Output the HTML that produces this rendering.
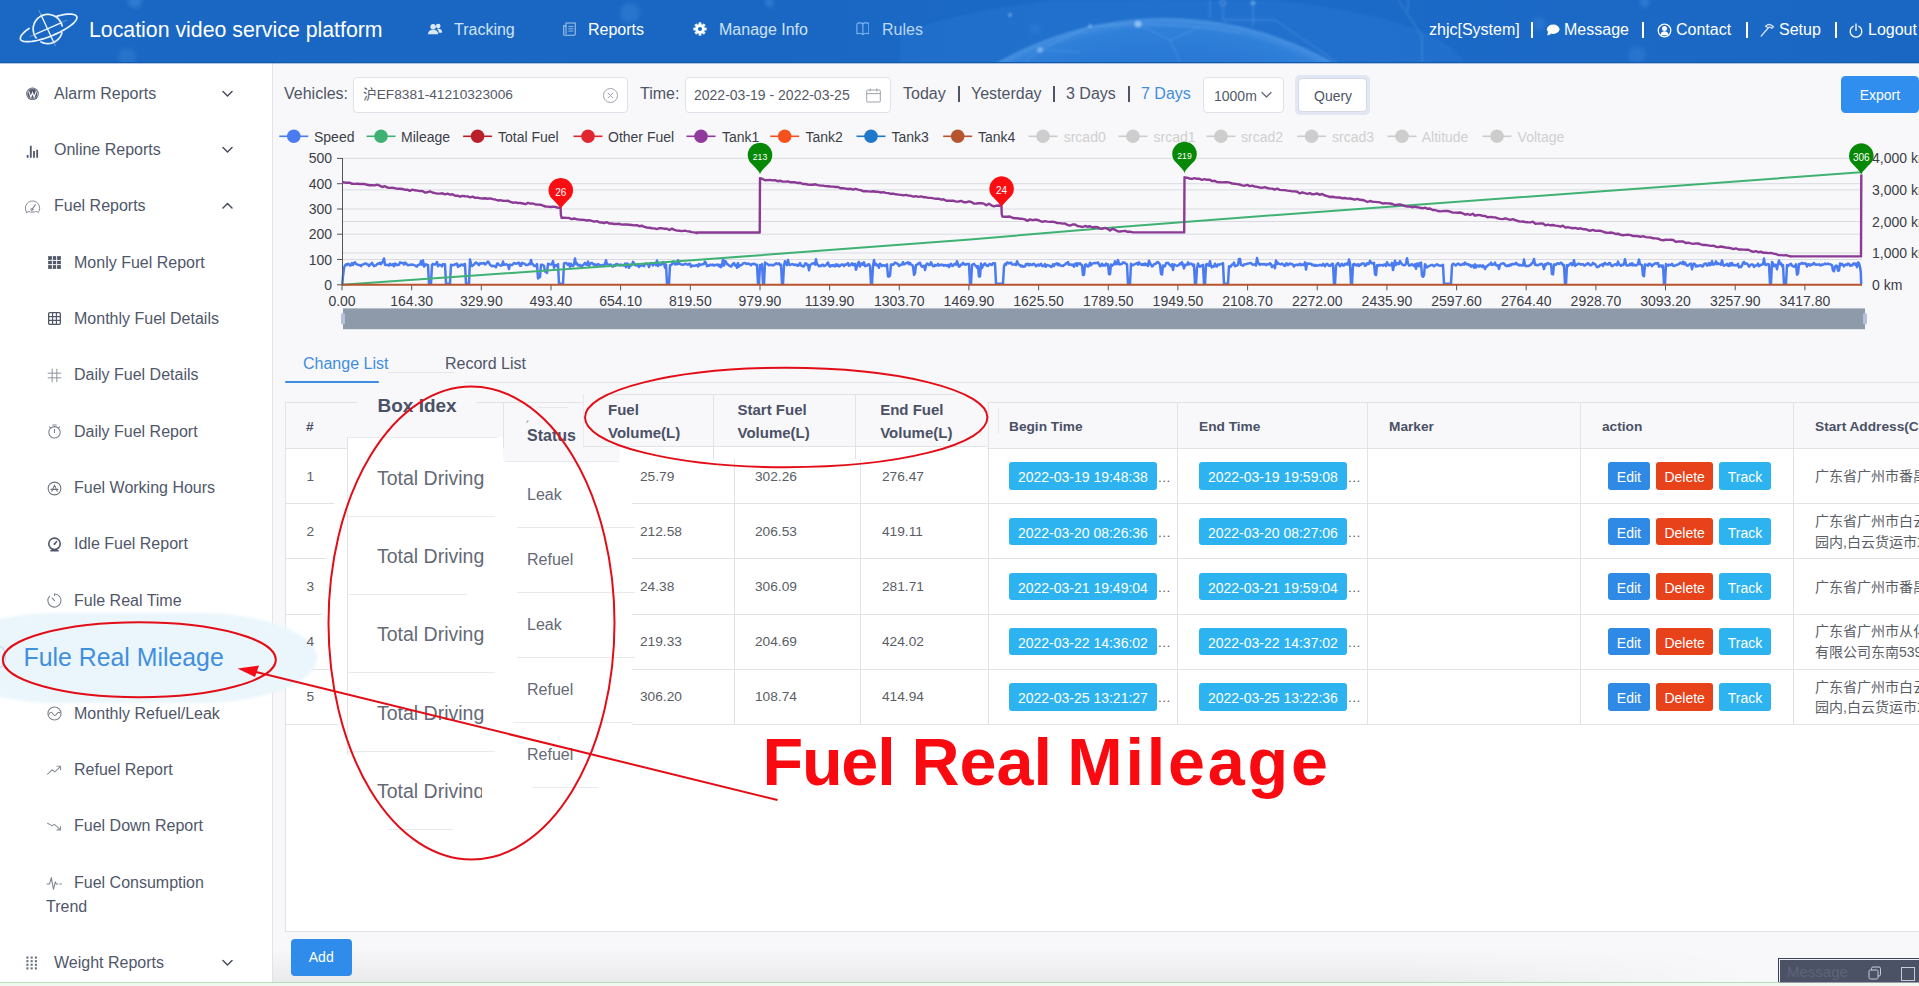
<!DOCTYPE html>
<html lang="en">
<head>
<meta charset="utf-8">
<title>Location video service platform</title>
<style>
*{box-sizing:border-box;margin:0;padding:0}
html,body{width:1919px;height:986px;overflow:hidden;background:#f8f8fa}
body{position:relative;font-family:"Liberation Sans","Noto Sans CJK SC",sans-serif;font-size:14px;color:#555a66;-webkit-font-smoothing:antialiased}
.abs{position:absolute}
/* header */
#hdr{position:absolute;left:0;top:0;width:1919px;height:63px;border-bottom:1px solid #1559a6;z-index:5;background:linear-gradient(90deg,#1a68c3 0%,#1967c2 40%,#1c6bc8 60%,#1a67c3 100%);overflow:hidden;color:#fff}
#hdr2{position:absolute;left:0;top:63px;width:1919px;height:1px;background:rgba(40,110,200,.38);z-index:5}
#hdr .t{position:absolute;white-space:nowrap;font-size:16px;line-height:20px;top:19.800px}
#hdr .title{position:absolute;left:89px;top:16.600px;font-size:21.300px;line-height:26px;white-space:nowrap}
#hdr .dim{color:#cfe2f7}
#hdr .bk{position:absolute;border-radius:50%;background:rgba(90,160,240,.35);filter:blur(2px)}
/* sidebar */
#side{position:absolute;left:0;top:62px;width:273px;height:924px;background:#fff;border-right:1px solid #e3e3e7;overflow:hidden}
#side .it{position:absolute;left:0;width:272px;height:24px;line-height:24px;font-size:16px;color:#51576a;white-space:nowrap}
#side .it span{position:absolute;top:0}
#side svg{position:absolute}
/* main */
#main{position:absolute;left:273px;top:62px;width:1646px;height:924px;background:#f8f8fa}
.lbl{position:absolute;font-size:16px;line-height:20px;color:#4f5565;white-space:nowrap}
.inp{position:absolute;height:36px;border:1px solid #dfe2e8;border-radius:4px;background:#fff}
.inp span{position:absolute;top:9px;font-size:14px;line-height:18px;color:#555a66;white-space:nowrap}
.btn{position:absolute;border-radius:3px;color:#fff;font-size:14px;text-align:center;white-space:nowrap}
.pipe{position:absolute;width:1.500px;height:16px;background:#fff}
</style>
</head>
<body>
<div id="hdr2"></div>
<div id="hdr">
  <div class="bk" style="left:128px;top:-6px;width:14px;height:14px"></div>
  <div class="bk" style="left:118px;top:48px;width:18px;height:18px;opacity:.6"></div>
  <div class="bk" style="left:620px;top:3px;width:20px;height:20px;opacity:.7"></div>
  <div class="bk" style="left:765px;top:-2px;width:9px;height:9px"></div>
  <div class="bk" style="left:1030px;top:24px;width:10px;height:10px;opacity:.6"></div>
  <div class="bk" style="left:1532px;top:17px;width:14px;height:14px;opacity:.6"></div>
  <div class="bk" style="left:1628px;top:46px;width:18px;height:18px;opacity:.6"></div>
  <div class="bk" style="left:1640px;top:-2px;width:9px;height:9px"></div>
  <svg class="abs" style="left:900px;top:0;filter:blur(1.100px)" width="620" height="63" viewBox="900 0 620 63">
    <defs><radialGradient id="gg" cx="1165" cy="357" r="339" gradientUnits="userSpaceOnUse"><stop offset=".82" stop-color="#3d8fe6" stop-opacity=".16"/><stop offset=".97" stop-color="#4da0f2" stop-opacity=".34"/><stop offset="1" stop-color="#7fc0ff" stop-opacity=".42"/></radialGradient></defs>
    <ellipse cx="1165" cy="70" rx="300" ry="75" fill="rgba(60,140,235,.16)"/><circle cx="1165" cy="357" r="339" fill="url(#gg)"/>
    <path d="M1090 26L1138 24L1200 27L1240 33M1090 26L1040 50L1025 62M1138 24L1170 40L1200 27M1170 40L1180 62M1040 50L1080 52" fill="none" stroke="rgba(170,215,255,.22)" stroke-width="1"/>
    <circle cx="1138" cy="24" r="3.500" fill="rgba(200,230,255,.55)"/><circle cx="1090" cy="26" r="2" fill="rgba(200,230,255,.4)"/><circle cx="1040" cy="50" r="3" fill="rgba(200,230,255,.4)"/><circle cx="1010" cy="15" r="2" fill="rgba(200,230,255,.4)"/>
    <path d="M1223 6V20H1275L1338 63M1253 4V26M1210 0V18M1398 0L1422 36V63M1408 0V12" fill="none" stroke="rgba(130,190,250,.38)" stroke-width="1"/>
    <circle cx="1223" cy="3" r="2.600" fill="none" stroke="rgba(150,205,255,.5)"/><circle cx="1253" cy="3" r="2.500" fill="rgba(150,205,255,.45)"/>
  </svg>
  <!-- logo -->
<svg class="abs" style="left:10px;top:2px" width="80" height="56" viewBox="10 2 80 56" fill="none" stroke="#eaf4ff" stroke-linecap="round" stroke-linejoin="round">
<path d="M57.1 16.1L58.9 15.6L60.6 15.3L62.2 14.9L63.8 14.6L65.3 14.4L66.8 14.2L68.1 14.1L69.4 14.1L70.6 14.1L71.7 14.2L72.7 14.3L73.7 14.5L74.5 14.7L75.1 15.0L75.7 15.4L76.2 15.8L76.5 16.2L76.8 16.7L76.9 17.3L76.9 17.9L76.7 18.5L76.5 19.2L76.1 19.9L75.6 20.7L75.0 21.5L74.3 22.3L73.5 23.1L72.5 24.0L71.5 24.8L70.4 25.7L69.1 26.6L67.8 27.5L66.4 28.4L65.0 29.3L63.4 30.2L61.8 31.1L60.2 32.0L58.5 32.8L56.7 33.6L54.9 34.4L53.1 35.2L51.3 36.0L49.5 36.7L47.6 37.4L45.8 38.0L44.0 38.6L42.1 39.1L40.4 39.6L38.6 40.1L36.9 40.5L35.3 40.8L33.7 41.1L32.1 41.4L30.7 41.5L29.3 41.7L28.0 41.7L26.8 41.7L25.6 41.7L24.6 41.5L23.7 41.4L22.9 41.1L22.2 40.8L21.6 40.5L21.1 40.1L20.7 39.7L20.5 39.2L20.3 38.6L20.3 38.0L20.5 37.4L20.7 36.7L21.0 36.0L21.5 35.2L22.1 34.5L22.8 33.7L23.6 32.8L24.5 32.0L25.5 31.1L26.6 30.2L27.9 29.3L29.1 28.4" stroke-width="1.700"/>
<path d="M61.9 32.7L61.7 33.5L61.4 34.3L61.0 35.1L60.7 35.9L60.2 36.7L59.7 37.4L59.2 38.1L58.6 38.8L58.0 39.4L57.4 40.0L56.7 40.6L56.0 41.1L55.3 41.5L54.5 42.0L53.7 42.3L52.9 42.7L52.1 43.0L51.2 43.2L50.4 43.4L49.5 43.5L48.6 43.6L47.8 43.6L46.9 43.6L46.0 43.5L45.2 43.4L44.3 43.2L43.5 42.9L42.6 42.7L41.8 42.3L41.0 41.9" stroke-width="1.700"/>
<path d="M36.2 37.9L35.7 37.2L35.2 36.4L34.8 35.7L34.4 34.9L34.1 34.1L33.8 33.2L33.6 32.4L33.4 31.5L33.3 30.7L33.2 29.8L33.2 28.9L33.2 28.1L33.3 27.2L33.4 26.4L33.6 25.5L33.9 24.7L34.1 23.8L34.5 23.0L34.9 22.2L35.3 21.5L35.8 20.8L36.3 20.1L36.8 19.4L37.4 18.7L38.0 18.1L38.7 17.6L39.4 17.1L40.1 16.6L40.9 16.1L41.7 15.8L42.5 15.4L43.3 15.1L44.1 14.9L45.0 14.7L45.8 14.5L46.7 14.4L47.6 14.4L48.4 14.4L49.3 14.5L50.2 14.6L51.0 14.8L51.9 15.0L52.7 15.2L53.5 15.6L54.3 15.9L55.1 16.3L55.8 16.8L56.5 17.3L57.2 17.8L57.9 18.4L58.5 19.0L59.0 19.7L59.6 20.4L60.1 21.1L60.5 21.8L60.9 22.6L61.3 23.4L61.6 24.2L61.9 25.0L62.1 25.9" stroke-width="1.700"/>
<path d="M41.200 15.200L53.600 42" stroke-width="1.400"/>
<path d="M39 10.500L41.200 15.200M53.600 42L55.400 45.700" stroke-width="1" stroke="rgba(200,225,255,.45)"/>
<path d="M36 33.900L61 22.800" stroke-width="1.400"/>
<path d="M29.900 36.600L36 33.900M61 22.800L66.800 20.200" stroke-width="1" stroke="rgba(200,225,255,.4)"/>
</svg>
  <div class="title">Location video service platform</div>
  <!-- nav -->
  <svg class="abs" style="left:427.800px;top:22.800px" width="14.600" height="12.800" viewBox="0 0 16 14" fill="rgba(255,255,255,.85)">
    <circle cx="5.6" cy="4.2" r="3"/><path d="M0 12.4c0-3.6 2.6-5 5.6-5s5.6 1.4 5.6 5z"/>
    <circle cx="11.2" cy="3.4" r="2.5"/><path d="M10.6 6.4c2.6-.4 5 1 5 4.2h-3.8c-.1-1.8-.6-3.2-1.900-4z"/>
  </svg>
  <div class="t dim" style="left:454px">Tracking</div>
  <svg class="abs" style="left:562.500px;top:22.200px" width="13.300" height="14.200" viewBox="0 0 15 16" fill="none" stroke="rgba(255,255,255,.62)" stroke-width="1.2">
    <path d="M3.4 1.2h10.4v12.2a1.6 1.6 0 0 1-1.600 1.600H2.400a1.600 1.600 0 0 1-1.600-1.600V4.400h2.600z M3.400 4.400v9.200"/>
    <path d="M6 5h5.600M6 7.600h5.600M6 10.200h5.600" stroke-width="1"/>
  </svg>
  <div class="t" style="left:588px">Reports</div>
  <svg class="abs" style="left:692.800px;top:22.300px" width="14" height="14" viewBox="0 0 16 16">
    <g fill="rgba(255,255,255,.9)">
      <circle cx="8" cy="8" r="5.400"/>
      <g id="gt"><rect x="6.300" y="0.400" width="3.400" height="15.200" rx=".8"/></g>
      <use href="#gt" transform="rotate(45 8 8)"/><use href="#gt" transform="rotate(90 8 8)"/><use href="#gt" transform="rotate(135 8 8)"/>
    </g>
    <circle cx="8" cy="8" r="2.300" fill="#1a65c1"/>
  </svg>
  <div class="t dim" style="left:719px">Manage Info</div>
  <svg class="abs" style="left:855.600px;top:21.600px" width="13.800" height="13.800" viewBox="0 0 13.800 13.800" fill="none" stroke="rgba(150,200,255,.85)" stroke-width="1.050" stroke-linejoin="round">
    <path d="M.9 12V2.900C.9 1.500 1.700 .9 3 .9H4.800C6.100 .9 6.900 1.500 6.900 2.900V12.800M6.900 2.900C6.900 1.500 7.700 .9 9 .9H10.800C12.100 .9 12.900 1.500 12.900 2.900V12M.9 12C3 10.800 5.300 11.200 6.900 12.800C8.500 11.200 10.800 10.800 12.900 12"/>
  </svg>
  <div class="t" style="left:882px;color:#bcd8f8">Rules</div>
  <!-- right -->
  <div class="t" style="left:1429px">zhjc[System]</div>
  <div class="pipe" style="left:1531.25px;top:21.800px"></div>
  <svg class="abs" style="left:1546px;top:24px" width="14" height="12" viewBox="0 0 14 12" fill="#fff"><ellipse cx="7.200" cy="5.200" rx="6.300" ry="4.700"/><path d="M1.200 11.400l1-4 3.200 2.600z"/></svg>
  <div class="t" style="left:1564px">Message</div>
  <div class="pipe" style="left:1642.25px;top:21.800px"></div>
  <svg class="abs" style="left:1657px;top:23px" width="15" height="15" viewBox="0 0 15 15"><circle cx="7.500" cy="7.500" r="6.300" fill="none" stroke="#fff" stroke-width="1.300"/><circle cx="7.500" cy="5.600" r="2.500" fill="#fff"/><path d="M3.600 12.200c0-3 1.800-4 3.900-4s3.900 1 3.900 4z" fill="#fff"/></svg>
  <div class="t" style="left:1676px">Contact</div>
  <div class="pipe" style="left:1746.25px;top:21.800px"></div>
  <svg class="abs" style="left:1760px;top:23px" width="15" height="14" viewBox="0 0 15 14" fill="none" stroke="rgba(255,255,255,.8)" stroke-width="1.300" stroke-linecap="round"><path d="M1.200 13l7.200-8.200M5.600 3.200c2.400-2.200 5.200-2.200 7.800.6l-1.600 1.600c-1.200-1.200-2.600-1.600-3.800-.6z"/></svg>
  <div class="t" style="left:1779px">Setup</div>
  <div class="pipe" style="left:1835.25px;top:21.800px"></div>
  <svg class="abs" style="left:1849px;top:23px" width="14" height="15" viewBox="0 0 14 15" fill="none" stroke="#fff" stroke-width="1.300" stroke-linecap="round"><path d="M4.200 3.200a5.800 5.800 0 1 0 5.600 0M7 .9v6.400"/></svg>
  <div class="t" style="left:1868px">Logout</div>
</div>
<div id="side">
<svg style="left:23.8px;top:23.1px" width="17" height="17" viewBox="0 0 16 16" fill="none" stroke="#51576a" stroke-width="1.1" stroke-linecap="round" stroke-linejoin="round"><circle cx="8" cy="8.300" r="5.900" fill="#51576a" stroke="none"/><circle cx="8" cy="8.300" r="4.900" stroke="#fff" stroke-width=".45"/><path d="M4.600 6.200l1.900 5.200 1.500-4.200 1.500 4.200 1.900-5.200" stroke="#fff" stroke-width="1.050" stroke-linejoin="miter"/></svg>
<div class="it" style="top:19.6px"><span style="left:54px">Alarm Reports</span></div>
<svg style="left:222px;top:27.6px" width="11" height="8" viewBox="0 0 11 8" fill="none" stroke="#4a4f5e" stroke-width="1.500" stroke-linecap="round" stroke-linejoin="round"><path d="M1 1.500L5.500 6 10 1.500"/></svg>
<svg style="left:23.8px;top:79.5px" width="17" height="17" viewBox="0 0 16 16" fill="none" stroke="#51576a" stroke-width="1.1" stroke-linecap="round" stroke-linejoin="round"><path d="M3.400 12.200v2.600M6.400 3.600v11.200M9.400 8.400v6.400M12.400 7.200v7.600" stroke-width="1.700" stroke-linecap="butt"/></svg>
<div class="it" style="top:76.0px"><span style="left:54px">Online Reports</span></div>
<svg style="left:222px;top:84.0px" width="11" height="8" viewBox="0 0 11 8" fill="none" stroke="#4a4f5e" stroke-width="1.500" stroke-linecap="round" stroke-linejoin="round"><path d="M1 1.500L5.500 6 10 1.500"/></svg>
<svg style="left:23.8px;top:135.9px" width="17" height="17" viewBox="0 0 16 16" fill="none" stroke="#51576a" stroke-width="1.1" stroke-linecap="round" stroke-linejoin="round"><path d="M2.600 13.600c-3.400-4.400 0-10.800 5.400-10.800s8.800 6.400 5.400 10.800c-1.400-1-2.600-1.200-3.400-.4h-4c-.8-.8-2-.6-3.400.4z" stroke="#7f8491" stroke-width=".9"/><path d="M7.600 10.600l3-4.200" stroke="#7f8491" stroke-width="1.100"/><circle cx="7.400" cy="10.800" r="1" stroke="#7f8491" stroke-width=".9"/></svg>
<div class="it" style="top:132.4px"><span style="left:54px">Fuel Reports</span></div>
<svg style="left:222px;top:140.4px" width="11" height="8" viewBox="0 0 11 8" fill="none" stroke="#4a4f5e" stroke-width="1.500" stroke-linecap="round" stroke-linejoin="round"><path d="M1 6L5.500 1.500 10 6"/></svg>
<svg style="left:45.5px;top:192.1px" width="17" height="17" viewBox="0 0 16 16" fill="none" stroke="#51576a" stroke-width="1.1" stroke-linecap="round" stroke-linejoin="round"><rect x="2" y="2" width="12" height="12" fill="#51576a" stroke="none"/><path d="M6 2v12M10 2v12M2 6h12M2 10h12" stroke="#fff" stroke-width=".9"/></svg>
<div class="it" style="top:188.6px"><span style="left:74px">Monly Fuel Report</span></div>
<svg style="left:45.5px;top:248.3px" width="17" height="17" viewBox="0 0 16 16" fill="none" stroke="#51576a" stroke-width="1.1" stroke-linecap="round" stroke-linejoin="round"><rect x="2.500" y="2.500" width="11" height="11" rx="1" stroke-width="1.200"/><path d="M6.200 2.500v11M9.800 2.500v11M2.500 6.200h11M2.500 9.800h11" stroke-width="1.100"/></svg>
<div class="it" style="top:244.8px"><span style="left:74px">Monthly Fuel Details</span></div>
<svg style="left:45.5px;top:304.7px" width="17" height="17" viewBox="0 0 16 16" fill="none" stroke="#51576a" stroke-width="1.1" stroke-linecap="round" stroke-linejoin="round"><path d="M5.800 2v12M10.200 2v12M2 5.800h12M2 10.200h12" stroke="#8a8f9c" stroke-width=".9"/></svg>
<div class="it" style="top:301.2px"><span style="left:74px">Daily Fuel Details</span></div>
<svg style="left:45.5px;top:361.1px" width="17" height="17" viewBox="0 0 16 16" fill="none" stroke="#51576a" stroke-width="1.1" stroke-linecap="round" stroke-linejoin="round"><circle cx="8" cy="8.800" r="5.400" stroke="#7d8290" stroke-width="1"/><path d="M8 5.800v3.200M6.400 1.800h3.200M3.200 3.600l1 .9M12.800 3.600l-1 .9" stroke="#7d8290" stroke-width="1"/></svg>
<div class="it" style="top:357.6px"><span style="left:74px">Daily Fuel Report</span></div>
<svg style="left:45.5px;top:417.5px" width="17" height="17" viewBox="0 0 16 16" fill="none" stroke="#51576a" stroke-width="1.1" stroke-linecap="round" stroke-linejoin="round"><circle cx="8" cy="8" r="6" stroke="#6d7280" stroke-width="1"/><path d="M5.400 10.600l2.600-5.800 2.600 5.800M4.600 8.800h6.800" stroke="#6d7280" stroke-width="1"/></svg>
<div class="it" style="top:414.0px"><span style="left:74px">Fuel Working Hours</span></div>
<svg style="left:45.5px;top:473.9px" width="17" height="17" viewBox="0 0 16 16" fill="none" stroke="#51576a" stroke-width="1.1" stroke-linecap="round" stroke-linejoin="round"><circle cx="8" cy="7.400" r="5.400" stroke-width="1.500"/><path d="M8 7.600l2-2.400M4.600 13.800h6.800" stroke-width="1.400"/><circle cx="8" cy="7.600" r=".9" fill="#51576a" stroke="none"/></svg>
<div class="it" style="top:470.4px"><span style="left:74px">Idle Fuel Report</span></div>
<svg style="left:45.5px;top:530.1px" width="17" height="17" viewBox="0 0 16 16" fill="none" stroke="#51576a" stroke-width="1.1" stroke-linecap="round" stroke-linejoin="round"><path d="M8 1.800a6.200 6.200 0 1 1-4.600 2" stroke="#7d8290" stroke-width="1"/><path d="M8 8.200l-2.400-2.600M8 1.800v1.400" stroke="#7d8290" stroke-width="1"/></svg>
<div class="it" style="top:526.6px"><span style="left:74px">Fule Real Time</span></div>
<svg style="left:45.5px;top:643.1px" width="17" height="17" viewBox="0 0 16 16" fill="none" stroke="#51576a" stroke-width="1.1" stroke-linecap="round" stroke-linejoin="round"><circle cx="8" cy="8" r="6.200" stroke="#7d8290" stroke-width="1"/><path d="M2.600 9c1.600-3 2.800-2.400 4 -.6s2.400 2 3.600-.2c.8-1.400 1.800-1.600 3.200-.8" stroke="#7d8290" stroke-width="1"/></svg>
<div class="it" style="top:639.6px"><span style="left:74px">Monthly Refuel/Leak</span></div>
<svg style="left:45.5px;top:699.5px" width="17" height="17" viewBox="0 0 16 16" fill="none" stroke="#51576a" stroke-width="1.1" stroke-linecap="round" stroke-linejoin="round"><path d="M1.500 11.500l4.200-4.200 2.600 2 5.200-5M10.500 4h3.200v3.200" stroke="#8a8f9c" stroke-width="1"/></svg>
<div class="it" style="top:696.0px"><span style="left:74px">Refuel Report</span></div>
<svg style="left:45.5px;top:755.9px" width="17" height="17" viewBox="0 0 16 16" fill="none" stroke="#51576a" stroke-width="1.1" stroke-linecap="round" stroke-linejoin="round"><path d="M1.500 5l4 2.200 2.400-1.200 5.600 5M10.400 11.200h3.200V8" stroke="#8a8f9c" stroke-width="1"/></svg>
<div class="it" style="top:752.4px"><span style="left:74px">Fuel Down Report</span></div>
<svg style="left:45.5px;top:812.1px" width="17" height="17" viewBox="0 0 16 16" fill="none" stroke="#51576a" stroke-width="1.1" stroke-linecap="round" stroke-linejoin="round"><path d="M1 9.400h2.400l1.600-6 2 11 1.800-7 .9 2h1.300M13 9.400h1.600" stroke="#7d8290" stroke-width="1"/></svg>
<div class="it" style="top:808.6px"><span style="left:74px">Fuel Consumption</span></div>
<svg style="left:23.8px;top:892.9px" width="17" height="17" viewBox="0 0 16 16" fill="none" stroke="#51576a" stroke-width="1.1" stroke-linecap="round" stroke-linejoin="round"><rect x="2.2" y="1.4" width="2" height="2" fill="#6d7280" stroke="none"/><rect x="2.2" y="4.8" width="2" height="2" fill="#6d7280" stroke="none"/><rect x="2.2" y="8.2" width="2" height="2" fill="#6d7280" stroke="none"/><rect x="2.2" y="11.6" width="2" height="2" fill="#6d7280" stroke="none"/><rect x="6.2" y="1.4" width="2" height="2" fill="#6d7280" stroke="none"/><rect x="6.2" y="4.8" width="2" height="2" fill="#6d7280" stroke="none"/><rect x="6.2" y="8.2" width="2" height="2" fill="#6d7280" stroke="none"/><rect x="6.2" y="11.6" width="2" height="2" fill="#6d7280" stroke="none"/><rect x="10.2" y="1.4" width="2" height="2" fill="#6d7280" stroke="none"/><rect x="10.2" y="4.8" width="2" height="2" fill="#6d7280" stroke="none"/><rect x="10.2" y="8.2" width="2" height="2" fill="#6d7280" stroke="none"/><rect x="10.2" y="11.6" width="2" height="2" fill="#6d7280" stroke="none"/></svg>
<div class="it" style="top:889.4px"><span style="left:54px">Weight Reports</span></div>
<svg style="left:222px;top:897.4px" width="11" height="8" viewBox="0 0 11 8" fill="none" stroke="#4a4f5e" stroke-width="1.500" stroke-linecap="round" stroke-linejoin="round"><path d="M1 1.500L5.500 6 10 1.500"/></svg>
<div class="it" style="top:832.600px"><span style="left:46px">Trend</span></div>
</div>
<div id="main"></div>
<!-- toolbar -->
<div class="lbl" style="left:284px;top:84px">Vehicles:</div>
<div class="inp" style="left:353px;top:77px;width:275px">
  <span style="left:9px;top:8px;font-size:13.700px">沪EF8381-41210323006</span>
  <svg class="abs" style="left:248px;top:9px" width="17" height="17" viewBox="0 0 17 17" fill="none" stroke="#9ea3ad" stroke-width="1"><circle cx="8.500" cy="8.500" r="7"/><path d="M5.800 5.800l5.400 5.400M11.200 5.800l-5.400 5.400"/></svg>
</div>
<div class="lbl" style="left:640px;top:84px">Time:</div>
<div class="inp" style="left:685px;top:77px;width:206px">
  <span style="left:8px;top:8px">2022-03-19 - 2022-03-25</span>
  <svg class="abs" style="left:180px;top:10px" width="15" height="15" viewBox="0 0 15 15" fill="none" stroke="#9ea3ad" stroke-width="1"><rect x=".7" y="2" width="13.600" height="12" rx="1"/><path d="M.7 5.600h13.600M4.200 .5v3M10.800 .5v3"/></svg>
</div>
<div class="lbl" style="left:903px;top:84px">Today</div>
<div class="pipe" style="left:958.2px;top:85.500px;background:#4f5565"></div>
<div class="lbl" style="left:971px;top:84px">Yesterday</div>
<div class="pipe" style="left:1053.3px;top:85.500px;background:#4f5565"></div>
<div class="lbl" style="left:1066px;top:84px">3 Days</div>
<div class="pipe" style="left:1128.1px;top:85.500px;background:#4f5565"></div>
<div class="lbl" style="left:1141px;top:84px;color:#3f8de0">7 Days</div>
<div class="inp" style="left:1203px;top:77px;width:81px">
  <span style="left:10px">1000m</span>
  <svg class="abs" style="left:57px;top:13px" width="11" height="8" viewBox="0 0 11 8" fill="none" stroke="#666b78" stroke-width="1.300" stroke-linecap="round" stroke-linejoin="round"><path d="M1 1.500L5.500 6 10 1.500"/></svg>
</div>
<div class="abs" style="left:1295px;top:75px;width:75px;height:40px;border-radius:5px;background:#e3e7f4"></div>
<div class="inp" style="left:1298px;top:78px;width:69px;height:34px;border-color:#d5d9e6"><span style="left:15px;top:8px;color:#4f5565">Query</span></div>
<div class="btn" style="left:1841.200px;top:76.300px;width:77.800px;height:37.200px;line-height:38px;background:#308eee;border-radius:4.500px;text-align:left;padding-left:18.500px">Export</div>
<svg class="abs" style="left:273px;top:120px" width="1646" height="222" viewBox="0 0 1646 222" font-family="Liberation Sans, sans-serif" font-size="14">
<path d="M6.3 16.3h29" stroke="#4b7bf0" stroke-width="1.600"/><circle cx="20.8" cy="16.3" r="6.800" fill="#4b7bf0"/>
<text x="41.0" y="21.6" fill="#3b3e47">Speed</text>
<path d="M93.5 16.3h29" stroke="#3fb273" stroke-width="1.600"/><circle cx="108.0" cy="16.3" r="6.800" fill="#3fb273"/>
<text x="128.0" y="21.6" fill="#3b3e47">Mileage</text>
<path d="M190.1 16.3h29" stroke="#b9202c" stroke-width="1.600"/><circle cx="204.6" cy="16.3" r="6.800" fill="#b9202c"/>
<text x="225.0" y="21.6" fill="#3b3e47">Total Fuel</text>
<path d="M300.5 16.3h29" stroke="#e2262f" stroke-width="1.600"/><circle cx="315.0" cy="16.3" r="6.800" fill="#e2262f"/>
<text x="335.0" y="21.6" fill="#3b3e47">Other Fuel</text>
<path d="M413.5 16.3h29" stroke="#8f3a9c" stroke-width="1.600"/><circle cx="428.0" cy="16.3" r="6.800" fill="#8f3a9c"/>
<text x="449.0" y="21.6" fill="#3b3e47">Tank1</text>
<path d="M497.2 16.3h29" stroke="#f4511e" stroke-width="1.600"/><circle cx="511.7" cy="16.3" r="6.800" fill="#f4511e"/>
<text x="532.5" y="21.6" fill="#3b3e47">Tank2</text>
<path d="M583.5 16.3h29" stroke="#1f78c9" stroke-width="1.600"/><circle cx="598.0" cy="16.3" r="6.800" fill="#1f78c9"/>
<text x="618.5" y="21.6" fill="#3b3e47">Tank3</text>
<path d="M670.2 16.3h29" stroke="#b7552f" stroke-width="1.600"/><circle cx="684.7" cy="16.3" r="6.800" fill="#b7552f"/>
<text x="705.0" y="21.6" fill="#3b3e47">Tank4</text>
<path d="M755.5 16.3h29" stroke="#cdcdcd" stroke-width="1.600"/><circle cx="770.0" cy="16.3" r="6.800" fill="#cdcdcd"/>
<text x="790.7" y="21.6" fill="#cfcfcf">srcad0</text>
<path d="M845.5 16.3h29" stroke="#cdcdcd" stroke-width="1.600"/><circle cx="860.0" cy="16.3" r="6.800" fill="#cdcdcd"/>
<text x="880.5" y="21.6" fill="#cfcfcf">srcad1</text>
<path d="M933.5 16.3h29" stroke="#cdcdcd" stroke-width="1.600"/><circle cx="948.0" cy="16.3" r="6.800" fill="#cdcdcd"/>
<text x="968.0" y="21.6" fill="#cfcfcf">srcad2</text>
<path d="M1024.1 16.3h29" stroke="#cdcdcd" stroke-width="1.600"/><circle cx="1038.6" cy="16.3" r="6.800" fill="#cdcdcd"/>
<text x="1059.0" y="21.6" fill="#cfcfcf">srcad3</text>
<path d="M1114.5 16.3h29" stroke="#cdcdcd" stroke-width="1.600"/><circle cx="1129.0" cy="16.3" r="6.800" fill="#cdcdcd"/>
<text x="1148.7" y="21.6" fill="#cfcfcf">Altitude</text>
<path d="M1209.5 16.3h29" stroke="#cdcdcd" stroke-width="1.600"/><circle cx="1224.0" cy="16.3" r="6.800" fill="#cdcdcd"/>
<text x="1244.6" y="21.6" fill="#cfcfcf">Voltage</text>
<path d="M69 38.4H1589" stroke="#d9dbe0" stroke-width="1"/>
<path d="M69 63.7H1589" stroke="#d9dbe0" stroke-width="1"/>
<path d="M69 89.0H1589" stroke="#d9dbe0" stroke-width="1"/>
<path d="M69 114.2H1589" stroke="#d9dbe0" stroke-width="1"/>
<path d="M69 139.5H1589" stroke="#d9dbe0" stroke-width="1"/>
<path d="M69 69.9H1589" stroke="#d9dbe0" stroke-width="1"/>
<path d="M69 101.5H1589" stroke="#d9dbe0" stroke-width="1"/>
<path d="M69 133.0H1589" stroke="#d9dbe0" stroke-width="1"/>
<text x="59" y="43.4" text-anchor="end" fill="#3b3e47">500</text>
<path d="M64 38.4h5" stroke="#555" stroke-width="1"/>
<text x="59" y="68.7" text-anchor="end" fill="#3b3e47">400</text>
<path d="M64 63.7h5" stroke="#555" stroke-width="1"/>
<text x="59" y="94.0" text-anchor="end" fill="#3b3e47">300</text>
<path d="M64 89.0h5" stroke="#555" stroke-width="1"/>
<text x="59" y="119.2" text-anchor="end" fill="#3b3e47">200</text>
<path d="M64 114.2h5" stroke="#555" stroke-width="1"/>
<text x="59" y="144.5" text-anchor="end" fill="#3b3e47">100</text>
<path d="M64 139.5h5" stroke="#555" stroke-width="1"/>
<text x="59" y="169.8" text-anchor="end" fill="#3b3e47">0</text>
<path d="M64 164.8h5" stroke="#555" stroke-width="1"/>
<text x="1599" y="43.4" fill="#3b3e47">4,000 km</text>
<text x="1599" y="75.0" fill="#3b3e47">3,000 km</text>
<text x="1599" y="106.7" fill="#3b3e47">2,000 km</text>
<text x="1599" y="138.3" fill="#3b3e47">1,000 km</text>
<text x="1599" y="169.9" fill="#3b3e47">0 km</text>
<path d="M69.0 164.8v5.500" stroke="#555" stroke-width="1"/>
<text x="69.0" y="185.5" text-anchor="middle" fill="#3b3e47">0.00</text>
<path d="M138.7 164.8v5.500" stroke="#555" stroke-width="1"/>
<text x="138.7" y="185.5" text-anchor="middle" fill="#3b3e47">164.30</text>
<path d="M208.3 164.8v5.500" stroke="#555" stroke-width="1"/>
<text x="208.3" y="185.5" text-anchor="middle" fill="#3b3e47">329.90</text>
<path d="M278.0 164.8v5.500" stroke="#555" stroke-width="1"/>
<text x="278.0" y="185.5" text-anchor="middle" fill="#3b3e47">493.40</text>
<path d="M347.6 164.8v5.500" stroke="#555" stroke-width="1"/>
<text x="347.6" y="185.5" text-anchor="middle" fill="#3b3e47">654.10</text>
<path d="M417.3 164.8v5.500" stroke="#555" stroke-width="1"/>
<text x="417.3" y="185.5" text-anchor="middle" fill="#3b3e47">819.50</text>
<path d="M487.0 164.8v5.500" stroke="#555" stroke-width="1"/>
<text x="487.0" y="185.5" text-anchor="middle" fill="#3b3e47">979.90</text>
<path d="M556.6 164.8v5.500" stroke="#555" stroke-width="1"/>
<text x="556.6" y="185.5" text-anchor="middle" fill="#3b3e47">1139.90</text>
<path d="M626.3 164.8v5.500" stroke="#555" stroke-width="1"/>
<text x="626.3" y="185.5" text-anchor="middle" fill="#3b3e47">1303.70</text>
<path d="M695.9 164.8v5.500" stroke="#555" stroke-width="1"/>
<text x="695.9" y="185.5" text-anchor="middle" fill="#3b3e47">1469.90</text>
<path d="M765.6 164.8v5.500" stroke="#555" stroke-width="1"/>
<text x="765.6" y="185.5" text-anchor="middle" fill="#3b3e47">1625.50</text>
<path d="M835.3 164.8v5.500" stroke="#555" stroke-width="1"/>
<text x="835.3" y="185.5" text-anchor="middle" fill="#3b3e47">1789.50</text>
<path d="M904.9 164.8v5.500" stroke="#555" stroke-width="1"/>
<text x="904.9" y="185.5" text-anchor="middle" fill="#3b3e47">1949.50</text>
<path d="M974.6 164.8v5.500" stroke="#555" stroke-width="1"/>
<text x="974.6" y="185.5" text-anchor="middle" fill="#3b3e47">2108.70</text>
<path d="M1044.2 164.8v5.500" stroke="#555" stroke-width="1"/>
<text x="1044.2" y="185.5" text-anchor="middle" fill="#3b3e47">2272.00</text>
<path d="M1113.9 164.8v5.500" stroke="#555" stroke-width="1"/>
<text x="1113.9" y="185.5" text-anchor="middle" fill="#3b3e47">2435.90</text>
<path d="M1183.6 164.8v5.500" stroke="#555" stroke-width="1"/>
<text x="1183.6" y="185.5" text-anchor="middle" fill="#3b3e47">2597.60</text>
<path d="M1253.2 164.8v5.500" stroke="#555" stroke-width="1"/>
<text x="1253.2" y="185.5" text-anchor="middle" fill="#3b3e47">2764.40</text>
<path d="M1322.9 164.8v5.500" stroke="#555" stroke-width="1"/>
<text x="1322.9" y="185.5" text-anchor="middle" fill="#3b3e47">2928.70</text>
<path d="M1392.5 164.8v5.500" stroke="#555" stroke-width="1"/>
<text x="1392.5" y="185.5" text-anchor="middle" fill="#3b3e47">3093.20</text>
<path d="M1462.2 164.8v5.500" stroke="#555" stroke-width="1"/>
<text x="1462.2" y="185.5" text-anchor="middle" fill="#3b3e47">3257.90</text>
<path d="M1531.9 164.8v5.500" stroke="#555" stroke-width="1"/>
<text x="1531.9" y="185.5" text-anchor="middle" fill="#3b3e47">3417.80</text>
<path d="M69.3,164.0 L70.0,156.0 L71.0,148.0 L72.0,145.5 L73.0,144.3 L74.0,145.0 L75.0,143.8 L76.0,144.1 L77.0,145.5 L78.0,145.2 L79.0,143.1 L80.0,144.9 L81.0,143.0 L82.0,142.3 L83.0,144.1 L84.0,144.4 L85.0,144.8 L86.0,145.1 L87.0,145.3 L88.0,146.1 L89.0,144.8 L90.0,144.6 L91.0,144.1 L92.0,143.5 L93.0,143.4 L94.0,144.4 L95.0,144.6 L96.0,145.9 L97.0,144.9 L98.0,143.9 L99.0,142.9 L100.0,144.8 L101.0,146.1 L102.0,145.5 L103.0,145.5 L104.0,144.3 L105.0,143.5 L106.0,143.7 L107.0,142.8 L108.0,144.2 L109.0,142.6 L110.0,141.4 L111.0,138.5 L112.0,144.8 L113.0,144.9 L114.0,144.9 L115.0,144.7 L116.0,145.6 L117.0,143.8 L118.0,144.7 L119.0,145.2 L120.0,144.2 L121.0,146.3 L122.0,143.5 L123.0,144.3 L124.0,145.2 L125.0,144.8 L126.0,144.8 L127.0,142.4 L128.0,142.8 L129.0,142.9 L130.0,143.0 L131.0,144.4 L132.0,142.5 L133.0,143.5 L134.0,144.5 L135.0,145.2 L136.0,145.1 L137.0,144.8 L138.0,144.7 L139.0,144.5 L140.0,144.7 L141.0,145.1 L142.0,145.4 L143.0,146.3 L144.0,146.5 L145.0,144.9 L146.0,144.7 L147.0,144.5 L148.0,141.1 L149.0,144.7 L150.0,140.4 L151.0,146.6 L152.0,145.0 L153.0,144.3 L154.0,145.0 L155.0,144.9 L156.0,163.8 L157.0,163.8 L158.0,163.8 L159.0,144.7 L160.0,143.9 L161.0,144.6 L162.0,144.6 L163.0,143.7 L164.0,142.0 L165.0,146.2 L166.0,145.0 L167.0,144.8 L168.0,145.3 L169.0,146.4 L170.0,144.1 L171.0,144.6 L172.0,144.2 L173.0,163.8 L174.0,163.8 L175.0,163.8 L176.0,163.8 L177.0,163.8 L178.0,144.8 L179.0,144.9 L180.0,145.2 L181.0,145.0 L182.0,144.2 L183.0,144.0 L184.0,143.6 L185.0,146.9 L186.0,145.6 L187.0,145.9 L188.0,144.6 L189.0,144.8 L190.0,145.4 L191.0,144.2 L192.0,144.1 L193.0,163.8 L194.0,163.8 L195.0,163.8 L196.0,163.8 L197.0,139.5 L198.0,143.9 L199.0,146.1 L200.0,145.2 L201.0,144.6 L202.0,143.3 L203.0,142.5 L204.0,143.3 L205.0,144.1 L206.0,145.2 L207.0,143.3 L208.0,143.5 L209.0,143.3 L210.0,143.4 L211.0,143.0 L212.0,144.4 L213.0,143.9 L214.0,142.4 L215.0,141.6 L216.0,142.7 L217.0,144.7 L218.0,145.4 L219.0,146.2 L220.0,145.8 L221.0,145.9 L222.0,146.4 L223.0,147.2 L224.0,143.7 L225.0,143.4 L226.0,144.9 L227.0,145.3 L228.0,145.7 L229.0,145.3 L230.0,141.5 L231.0,144.8 L232.0,144.7 L233.0,144.3 L234.0,144.5 L235.0,145.0 L236.0,149.1 L237.0,144.6 L238.0,145.1 L239.0,145.1 L240.0,144.1 L241.0,143.0 L242.0,143.4 L243.0,143.8 L244.0,143.3 L245.0,143.0 L246.0,142.7 L247.0,145.7 L248.0,145.8 L249.0,142.9 L250.0,143.2 L251.0,143.4 L252.0,144.1 L253.0,145.0 L254.0,145.0 L255.0,144.8 L256.0,143.8 L257.0,144.2 L258.0,139.9 L259.0,144.0 L260.0,144.2 L261.0,145.9 L262.0,146.2 L263.0,145.7 L264.0,144.1 L265.0,158.4 L266.0,157.8 L267.0,157.1 L268.0,144.8 L269.0,144.7 L270.0,145.2 L271.0,145.8 L272.0,151.6 L273.0,151.5 L274.0,152.9 L275.0,143.8 L276.0,144.1 L277.0,144.4 L278.0,144.6 L279.0,143.9 L280.0,141.1 L281.0,147.9 L282.0,145.4 L283.0,145.0 L284.0,146.1 L285.0,144.2 L286.0,163.8 L287.0,163.8 L288.0,163.8 L289.0,163.8 L290.0,163.8 L291.0,143.4 L292.0,143.0 L293.0,142.9 L294.0,143.8 L295.0,144.9 L296.0,143.5 L297.0,146.8 L298.0,143.7 L299.0,145.8 L300.0,146.2 L301.0,144.1 L302.0,138.5 L303.0,144.1 L304.0,143.3 L305.0,145.6 L306.0,145.6 L307.0,144.8 L308.0,146.3 L309.0,146.3 L310.0,145.0 L311.0,144.1 L312.0,142.9 L313.0,144.5 L314.0,144.8 L315.0,141.6 L316.0,145.7 L317.0,144.3 L318.0,143.1 L319.0,143.0 L320.0,143.9 L321.0,144.9 L322.0,144.3 L323.0,145.6 L324.0,145.1 L325.0,144.0 L326.0,144.6 L327.0,144.9 L328.0,146.0 L329.0,145.6 L330.0,144.8 L331.0,145.8 L332.0,144.0 L333.0,140.2 L334.0,144.5 L335.0,144.4 L336.0,145.0 L337.0,144.8 L338.0,144.6 L339.0,146.3 L340.0,146.7 L341.0,145.1 L342.0,145.7 L343.0,144.2 L344.0,144.0 L345.0,144.8 L346.0,144.8 L347.0,145.4 L348.0,144.6 L349.0,144.9 L350.0,145.6 L351.0,145.5 L352.0,143.6 L353.0,147.1 L354.0,143.5 L355.0,144.2 L356.0,147.8 L357.0,144.8 L358.0,145.5 L359.0,144.7 L360.0,141.9 L361.0,143.3 L362.0,145.3 L363.0,145.2 L364.0,145.4 L365.0,145.3 L366.0,147.0 L367.0,145.9 L368.0,145.5 L369.0,145.6 L370.0,145.3 L371.0,146.1 L372.0,144.0 L373.0,143.4 L374.0,144.0 L375.0,144.0 L376.0,147.0 L377.0,144.1 L378.0,143.0 L379.0,144.0 L380.0,145.4 L381.0,143.5 L382.0,143.5 L383.0,145.1 L384.0,140.4 L385.0,146.1 L386.0,144.3 L387.0,144.5 L388.0,145.0 L389.0,143.8 L390.0,142.1 L391.0,143.8 L392.0,147.7 L393.0,144.4 L394.0,163.8 L395.0,163.8 L396.0,163.8 L397.0,145.2 L398.0,145.1 L399.0,144.2 L400.0,141.5 L401.0,142.3 L402.0,144.4 L403.0,143.8 L404.0,144.4 L405.0,140.3 L406.0,143.7 L407.0,143.6 L408.0,144.6 L409.0,144.6 L410.0,144.9 L411.0,144.4 L412.0,143.9 L413.0,143.7 L414.0,144.3 L415.0,144.8 L416.0,144.0 L417.0,143.7 L418.0,146.7 L419.0,145.5 L420.0,145.9 L421.0,145.7 L422.0,145.8 L423.0,145.2 L424.0,145.1 L425.0,146.4 L426.0,144.0 L427.0,145.2 L428.0,144.4 L429.0,144.5 L430.0,144.3 L431.0,143.9 L432.0,141.6 L433.0,143.2 L434.0,146.1 L435.0,145.4 L436.0,145.8 L437.0,144.7 L438.0,144.8 L439.0,145.2 L440.0,144.5 L441.0,145.6 L442.0,145.1 L443.0,145.0 L444.0,144.8 L445.0,144.6 L446.0,146.3 L447.0,144.8 L448.0,147.2 L449.0,145.3 L450.0,139.2 L451.0,145.6 L452.0,141.0 L453.0,142.0 L454.0,144.1 L455.0,144.4 L456.0,145.6 L457.0,145.7 L458.0,146.6 L459.0,145.5 L460.0,143.6 L461.0,143.1 L462.0,145.4 L463.0,144.9 L464.0,147.8 L465.0,143.1 L466.0,146.6 L467.0,145.2 L468.0,145.2 L469.0,144.6 L470.0,143.5 L471.0,143.1 L472.0,143.1 L473.0,143.8 L474.0,143.9 L475.0,143.5 L476.0,143.8 L477.0,144.3 L478.0,145.3 L479.0,144.0 L480.0,144.0 L481.0,143.7 L482.0,144.2 L483.0,144.9 L484.0,144.7 L485.0,163.8 L486.0,163.8 L487.0,145.1 L488.0,147.3 L489.0,144.1 L490.0,163.8 L491.0,163.8 L492.0,142.5 L493.0,143.4 L494.0,143.7 L495.0,144.5 L496.0,145.3 L497.0,144.9 L498.0,144.8 L499.0,145.0 L500.0,145.5 L501.0,144.6 L502.0,144.5 L503.0,143.2 L504.0,143.7 L505.0,143.9 L506.0,143.4 L507.0,145.0 L508.0,144.5 L509.0,163.8 L510.0,163.8 L511.0,145.3 L512.0,141.2 L513.0,143.6 L514.0,145.1 L515.0,140.0 L516.0,144.6 L517.0,145.0 L518.0,144.5 L519.0,144.0 L520.0,144.4 L521.0,144.9 L522.0,144.5 L523.0,145.2 L524.0,144.7 L525.0,145.8 L526.0,144.8 L527.0,143.0 L528.0,145.5 L529.0,145.8 L530.0,146.5 L531.0,146.3 L532.0,143.7 L533.0,143.3 L534.0,144.9 L535.0,144.7 L536.0,150.2 L537.0,145.2 L538.0,144.5 L539.0,143.6 L540.0,143.5 L541.0,143.1 L542.0,144.7 L543.0,139.3 L544.0,144.6 L545.0,144.8 L546.0,146.3 L547.0,145.7 L548.0,146.0 L549.0,144.7 L550.0,144.8 L551.0,146.1 L552.0,145.5 L553.0,145.1 L554.0,143.6 L555.0,142.5 L556.0,145.6 L557.0,146.6 L558.0,145.2 L559.0,146.0 L560.0,145.0 L561.0,145.6 L562.0,146.5 L563.0,144.3 L564.0,145.8 L565.0,144.7 L566.0,146.5 L567.0,145.9 L568.0,144.7 L569.0,144.5 L570.0,144.8 L571.0,146.1 L572.0,144.5 L573.0,144.7 L574.0,144.1 L575.0,143.1 L576.0,145.7 L577.0,145.3 L578.0,144.5 L579.0,143.2 L580.0,145.2 L581.0,144.0 L582.0,143.9 L583.0,149.7 L584.0,146.3 L585.0,143.3 L586.0,141.9 L587.0,146.5 L588.0,144.3 L589.0,143.4 L590.0,144.7 L591.0,142.3 L592.0,146.1 L593.0,145.9 L594.0,145.6 L595.0,144.4 L596.0,144.2 L597.0,146.0 L598.0,163.8 L599.0,163.8 L600.0,146.1 L601.0,140.0 L602.0,145.0 L603.0,143.9 L604.0,145.5 L605.0,144.8 L606.0,147.8 L607.0,143.8 L608.0,144.7 L609.0,145.9 L610.0,145.2 L611.0,145.2 L612.0,146.1 L613.0,145.4 L614.0,144.3 L615.0,156.4 L616.0,156.5 L617.0,155.5 L618.0,144.6 L619.0,144.6 L620.0,144.9 L621.0,144.0 L622.0,142.6 L623.0,142.9 L624.0,143.6 L625.0,144.1 L626.0,145.9 L627.0,145.2 L628.0,144.7 L629.0,144.5 L630.0,142.2 L631.0,144.4 L632.0,143.9 L633.0,143.3 L634.0,143.0 L635.0,142.2 L636.0,144.1 L637.0,142.9 L638.0,144.6 L639.0,144.9 L640.0,146.1 L641.0,154.9 L642.0,153.3 L643.0,145.0 L644.0,144.8 L645.0,144.1 L646.0,142.9 L647.0,142.8 L648.0,145.4 L649.0,146.7 L650.0,146.1 L651.0,145.7 L652.0,150.0 L653.0,145.4 L654.0,143.6 L655.0,144.1 L656.0,144.9 L657.0,144.9 L658.0,142.3 L659.0,144.6 L660.0,146.2 L661.0,146.3 L662.0,144.9 L663.0,145.7 L664.0,145.2 L665.0,143.9 L666.0,145.6 L667.0,145.2 L668.0,144.5 L669.0,145.2 L670.0,144.8 L671.0,145.8 L672.0,145.1 L673.0,145.2 L674.0,145.9 L675.0,144.9 L676.0,147.1 L677.0,145.1 L678.0,143.7 L679.0,145.8 L680.0,145.9 L681.0,144.4 L682.0,143.9 L683.0,144.7 L684.0,141.2 L685.0,144.3 L686.0,146.7 L687.0,145.9 L688.0,144.6 L689.0,144.6 L690.0,142.9 L691.0,143.7 L692.0,144.8 L693.0,144.6 L694.0,144.0 L695.0,143.9 L696.0,144.1 L697.0,163.8 L698.0,163.8 L699.0,145.1 L700.0,144.3 L701.0,143.9 L702.0,145.4 L703.0,145.9 L704.0,147.6 L705.0,146.1 L706.0,156.6 L707.0,156.3 L708.0,143.5 L709.0,148.0 L710.0,145.5 L711.0,144.5 L712.0,143.5 L713.0,145.1 L714.0,145.8 L715.0,145.9 L716.0,144.5 L717.0,143.9 L718.0,144.7 L719.0,144.9 L720.0,143.2 L721.0,143.4 L722.0,143.3 L723.0,163.8 L724.0,163.8 L725.0,163.8 L726.0,163.8 L727.0,163.8 L728.0,163.8 L729.0,163.8 L730.0,163.8 L731.0,146.2 L732.0,144.0 L733.0,144.9 L734.0,142.4 L735.0,142.7 L736.0,143.4 L737.0,143.0 L738.0,142.6 L739.0,144.5 L740.0,144.4 L741.0,144.6 L742.0,144.1 L743.0,145.2 L744.0,141.3 L745.0,143.4 L746.0,144.9 L747.0,145.0 L748.0,146.4 L749.0,145.6 L750.0,146.7 L751.0,146.5 L752.0,146.5 L753.0,144.0 L754.0,144.6 L755.0,143.8 L756.0,145.4 L757.0,144.1 L758.0,144.6 L759.0,145.1 L760.0,144.0 L761.0,143.8 L762.0,144.9 L763.0,146.3 L764.0,145.2 L765.0,144.5 L766.0,145.6 L767.0,144.4 L768.0,143.7 L769.0,146.1 L770.0,145.8 L771.0,146.2 L772.0,144.1 L773.0,146.7 L774.0,144.9 L775.0,145.2 L776.0,145.4 L777.0,146.1 L778.0,146.9 L779.0,146.5 L780.0,144.4 L781.0,145.9 L782.0,144.0 L783.0,143.9 L784.0,143.2 L785.0,145.1 L786.0,143.9 L787.0,145.1 L788.0,145.7 L789.0,145.7 L790.0,145.9 L791.0,145.1 L792.0,144.7 L793.0,143.3 L794.0,143.6 L795.0,142.0 L796.0,144.9 L797.0,144.6 L798.0,144.4 L799.0,145.3 L800.0,144.5 L801.0,146.7 L802.0,144.0 L803.0,143.4 L804.0,145.9 L805.0,143.3 L806.0,143.9 L807.0,143.2 L808.0,144.7 L809.0,145.1 L810.0,155.0 L811.0,154.7 L812.0,144.8 L813.0,144.3 L814.0,145.7 L815.0,146.6 L816.0,145.7 L817.0,142.7 L818.0,145.3 L819.0,143.7 L820.0,143.4 L821.0,143.1 L822.0,143.2 L823.0,142.9 L824.0,143.1 L825.0,142.4 L826.0,144.3 L827.0,146.2 L828.0,145.5 L829.0,143.7 L830.0,145.6 L831.0,144.9 L832.0,145.6 L833.0,143.6 L834.0,144.9 L835.0,144.4 L836.0,154.2 L837.0,154.2 L838.0,144.4 L839.0,145.7 L840.0,144.8 L841.0,144.3 L842.0,141.4 L843.0,144.2 L844.0,144.0 L845.0,140.1 L846.0,144.3 L847.0,144.4 L848.0,143.9 L849.0,143.9 L850.0,142.4 L851.0,142.8 L852.0,142.8 L853.0,143.9 L854.0,144.4 L855.0,163.8 L856.0,163.8 L857.0,163.8 L858.0,143.8 L859.0,145.2 L860.0,145.2 L861.0,144.5 L862.0,144.1 L863.0,143.6 L864.0,143.1 L865.0,144.6 L866.0,142.3 L867.0,143.7 L868.0,144.6 L869.0,145.0 L870.0,144.0 L871.0,145.0 L872.0,143.6 L873.0,145.0 L874.0,144.1 L875.0,145.9 L876.0,140.7 L877.0,143.2 L878.0,144.7 L879.0,146.5 L880.0,145.8 L881.0,144.3 L882.0,144.1 L883.0,143.6 L884.0,142.2 L885.0,142.1 L886.0,143.1 L887.0,144.7 L888.0,153.9 L889.0,154.6 L890.0,145.4 L891.0,146.4 L892.0,146.2 L893.0,143.3 L894.0,143.1 L895.0,142.8 L896.0,144.2 L897.0,145.1 L898.0,146.2 L899.0,144.2 L900.0,150.1 L901.0,144.5 L902.0,144.9 L903.0,145.5 L904.0,146.0 L905.0,145.4 L906.0,144.9 L907.0,143.4 L908.0,144.3 L909.0,142.3 L910.0,144.9 L911.0,148.4 L912.0,144.7 L913.0,144.9 L914.0,144.9 L915.0,142.4 L916.0,144.4 L917.0,143.7 L918.0,143.7 L919.0,144.2 L920.0,145.8 L921.0,144.5 L922.0,163.8 L923.0,163.8 L924.0,148.0 L925.0,143.4 L926.0,145.9 L927.0,146.7 L928.0,145.9 L929.0,145.4 L930.0,144.8 L931.0,163.8 L932.0,163.8 L933.0,144.6 L934.0,144.1 L935.0,145.3 L936.0,145.6 L937.0,141.2 L938.0,146.2 L939.0,147.4 L940.0,146.1 L941.0,146.5 L942.0,143.7 L943.0,146.2 L944.0,146.5 L945.0,144.4 L946.0,144.8 L947.0,144.3 L948.0,144.1 L949.0,144.1 L950.0,143.2 L951.0,163.8 L952.0,163.8 L953.0,163.8 L954.0,163.8 L955.0,163.8 L956.0,146.2 L957.0,147.1 L958.0,146.2 L959.0,144.4 L960.0,144.6 L961.0,142.6 L962.0,146.2 L963.0,145.8 L964.0,145.5 L965.0,144.8 L966.0,138.9 L967.0,139.0 L968.0,144.9 L969.0,145.1 L970.0,145.8 L971.0,144.5 L972.0,144.3 L973.0,144.3 L974.0,143.9 L975.0,143.4 L976.0,143.5 L977.0,143.0 L978.0,143.0 L979.0,144.2 L980.0,144.8 L981.0,144.6 L982.0,144.3 L983.0,145.6 L984.0,138.0 L985.0,142.1 L986.0,144.0 L987.0,144.9 L988.0,143.9 L989.0,144.3 L990.0,144.4 L991.0,144.0 L992.0,144.4 L993.0,145.1 L994.0,144.1 L995.0,144.4 L996.0,144.2 L997.0,143.3 L998.0,144.2 L999.0,147.0 L1000.0,145.8 L1001.0,145.6 L1002.0,148.2 L1003.0,140.4 L1004.0,144.0 L1005.0,142.8 L1006.0,143.8 L1007.0,144.2 L1008.0,144.2 L1009.0,143.6 L1010.0,144.3 L1011.0,145.4 L1012.0,145.9 L1013.0,143.6 L1014.0,143.5 L1015.0,145.1 L1016.0,144.4 L1017.0,143.5 L1018.0,144.1 L1019.0,144.0 L1020.0,145.0 L1021.0,146.5 L1022.0,145.1 L1023.0,145.0 L1024.0,144.5 L1025.0,145.2 L1026.0,144.5 L1027.0,143.8 L1028.0,145.2 L1029.0,144.6 L1030.0,144.6 L1031.0,145.0 L1032.0,142.4 L1033.0,149.5 L1034.0,143.5 L1035.0,143.9 L1036.0,143.6 L1037.0,143.7 L1038.0,143.8 L1039.0,145.1 L1040.0,144.5 L1041.0,145.5 L1042.0,145.9 L1043.0,144.9 L1044.0,145.8 L1045.0,145.4 L1046.0,145.3 L1047.0,144.7 L1048.0,145.3 L1049.0,145.6 L1050.0,143.8 L1051.0,144.8 L1052.0,146.2 L1053.0,144.3 L1054.0,143.8 L1055.0,144.5 L1056.0,145.8 L1057.0,145.9 L1058.0,145.1 L1059.0,143.7 L1060.0,143.9 L1061.0,163.8 L1062.0,163.8 L1063.0,145.8 L1064.0,144.3 L1065.0,143.0 L1066.0,144.6 L1067.0,146.2 L1068.0,144.7 L1069.0,143.8 L1070.0,145.5 L1071.0,145.4 L1072.0,143.8 L1073.0,144.4 L1074.0,143.4 L1075.0,144.6 L1076.0,139.5 L1077.0,143.5 L1078.0,163.8 L1079.0,163.8 L1080.0,144.8 L1081.0,143.9 L1082.0,145.1 L1083.0,144.5 L1084.0,145.5 L1085.0,144.2 L1086.0,146.0 L1087.0,144.5 L1088.0,144.8 L1089.0,143.5 L1090.0,143.6 L1091.0,143.4 L1092.0,145.9 L1093.0,145.4 L1094.0,143.2 L1095.0,144.0 L1096.0,143.9 L1097.0,140.9 L1098.0,142.4 L1099.0,143.5 L1100.0,143.3 L1101.0,142.7 L1102.0,154.2 L1103.0,155.1 L1104.0,145.2 L1105.0,145.9 L1106.0,144.8 L1107.0,145.6 L1108.0,144.9 L1109.0,145.1 L1110.0,145.6 L1111.0,144.5 L1112.0,144.5 L1113.0,145.9 L1114.0,142.3 L1115.0,144.3 L1116.0,145.2 L1117.0,145.0 L1118.0,145.3 L1119.0,142.9 L1120.0,150.1 L1121.0,145.5 L1122.0,140.7 L1123.0,145.1 L1124.0,143.7 L1125.0,143.0 L1126.0,144.1 L1127.0,141.1 L1128.0,142.7 L1129.0,144.4 L1130.0,144.9 L1131.0,145.2 L1132.0,145.2 L1133.0,143.4 L1134.0,138.2 L1135.0,143.3 L1136.0,145.6 L1137.0,144.9 L1138.0,145.2 L1139.0,144.2 L1140.0,145.3 L1141.0,145.9 L1142.0,144.2 L1143.0,148.7 L1144.0,143.8 L1145.0,143.5 L1146.0,146.2 L1147.0,143.1 L1148.0,142.6 L1149.0,155.4 L1150.0,156.8 L1151.0,155.3 L1152.0,144.2 L1153.0,145.5 L1154.0,147.4 L1155.0,146.5 L1156.0,146.1 L1157.0,145.6 L1158.0,145.2 L1159.0,144.8 L1160.0,145.3 L1161.0,146.3 L1162.0,145.5 L1163.0,144.8 L1164.0,144.2 L1165.0,145.2 L1166.0,145.6 L1167.0,145.5 L1168.0,145.7 L1169.0,145.6 L1170.0,144.8 L1171.0,163.8 L1172.0,163.8 L1173.0,163.8 L1174.0,163.8 L1175.0,163.8 L1176.0,163.8 L1177.0,163.8 L1178.0,163.8 L1179.0,145.2 L1180.0,143.8 L1181.0,144.0 L1182.0,145.3 L1183.0,145.4 L1184.0,144.2 L1185.0,143.6 L1186.0,143.9 L1187.0,145.1 L1188.0,145.1 L1189.0,144.6 L1190.0,143.8 L1191.0,144.6 L1192.0,142.6 L1193.0,143.8 L1194.0,144.6 L1195.0,144.0 L1196.0,145.2 L1197.0,144.8 L1198.0,146.6 L1199.0,145.5 L1200.0,145.4 L1201.0,147.7 L1202.0,144.4 L1203.0,147.5 L1204.0,145.4 L1205.0,145.7 L1206.0,146.7 L1207.0,145.3 L1208.0,145.9 L1209.0,147.0 L1210.0,145.4 L1211.0,146.8 L1212.0,149.0 L1213.0,146.4 L1214.0,146.4 L1215.0,145.2 L1216.0,144.4 L1217.0,144.5 L1218.0,142.7 L1219.0,144.9 L1220.0,144.4 L1221.0,144.4 L1222.0,142.6 L1223.0,145.4 L1224.0,145.4 L1225.0,145.3 L1226.0,148.9 L1227.0,144.9 L1228.0,144.0 L1229.0,143.6 L1230.0,143.3 L1231.0,143.5 L1232.0,145.0 L1233.0,145.8 L1234.0,146.2 L1235.0,145.2 L1236.0,146.0 L1237.0,144.6 L1238.0,145.3 L1239.0,144.0 L1240.0,144.0 L1241.0,144.4 L1242.0,143.9 L1243.0,142.7 L1244.0,144.4 L1245.0,144.3 L1246.0,145.4 L1247.0,144.8 L1248.0,145.3 L1249.0,145.5 L1250.0,145.5 L1251.0,139.6 L1252.0,145.1 L1253.0,146.2 L1254.0,145.9 L1255.0,146.0 L1256.0,145.8 L1257.0,144.9 L1258.0,144.7 L1259.0,143.0 L1260.0,142.4 L1261.0,139.0 L1262.0,144.9 L1263.0,144.5 L1264.0,145.2 L1265.0,145.3 L1266.0,144.6 L1267.0,144.6 L1268.0,143.7 L1269.0,143.9 L1270.0,145.2 L1271.0,149.1 L1272.0,144.2 L1273.0,145.1 L1274.0,143.4 L1275.0,143.0 L1276.0,144.1 L1277.0,144.1 L1278.0,144.2 L1279.0,154.1 L1280.0,154.4 L1281.0,144.6 L1282.0,144.5 L1283.0,144.8 L1284.0,143.7 L1285.0,143.2 L1286.0,144.0 L1287.0,143.5 L1288.0,142.6 L1289.0,143.6 L1290.0,145.3 L1291.0,145.0 L1292.0,163.8 L1293.0,163.8 L1294.0,145.0 L1295.0,146.1 L1296.0,144.8 L1297.0,144.1 L1298.0,143.2 L1299.0,145.2 L1300.0,144.5 L1301.0,140.3 L1302.0,145.9 L1303.0,144.7 L1304.0,144.8 L1305.0,143.7 L1306.0,143.8 L1307.0,143.9 L1308.0,144.7 L1309.0,144.2 L1310.0,144.3 L1311.0,145.5 L1312.0,145.6 L1313.0,144.3 L1314.0,144.2 L1315.0,143.1 L1316.0,144.0 L1317.0,145.3 L1318.0,145.3 L1319.0,144.5 L1320.0,142.9 L1321.0,143.9 L1322.0,143.9 L1323.0,145.6 L1324.0,147.2 L1325.0,146.6 L1326.0,146.6 L1327.0,145.2 L1328.0,144.9 L1329.0,144.2 L1330.0,146.0 L1331.0,143.6 L1332.0,142.9 L1333.0,144.4 L1334.0,144.1 L1335.0,144.6 L1336.0,143.1 L1337.0,142.9 L1338.0,145.2 L1339.0,146.1 L1340.0,145.5 L1341.0,145.1 L1342.0,144.3 L1343.0,144.5 L1344.0,145.2 L1345.0,141.6 L1346.0,144.3 L1347.0,145.0 L1348.0,145.9 L1349.0,144.6 L1350.0,145.0 L1351.0,144.1 L1352.0,139.2 L1353.0,144.6 L1354.0,145.6 L1355.0,145.6 L1356.0,145.1 L1357.0,143.9 L1358.0,145.1 L1359.0,143.2 L1360.0,145.4 L1361.0,144.5 L1362.0,145.2 L1363.0,145.4 L1364.0,145.0 L1365.0,143.9 L1366.0,139.6 L1367.0,144.2 L1368.0,144.7 L1369.0,145.2 L1370.0,155.5 L1371.0,156.1 L1372.0,144.4 L1373.0,144.8 L1374.0,144.7 L1375.0,145.8 L1376.0,143.8 L1377.0,143.8 L1378.0,144.9 L1379.0,146.1 L1380.0,144.6 L1381.0,144.5 L1382.0,143.4 L1383.0,143.2 L1384.0,143.8 L1385.0,143.0 L1386.0,146.7 L1387.0,145.4 L1388.0,145.6 L1389.0,147.0 L1390.0,145.5 L1391.0,163.8 L1392.0,163.8 L1393.0,144.1 L1394.0,145.3 L1395.0,145.7 L1396.0,144.6 L1397.0,145.2 L1398.0,145.1 L1399.0,143.7 L1400.0,145.6 L1401.0,146.0 L1402.0,145.6 L1403.0,144.9 L1404.0,144.9 L1405.0,144.5 L1406.0,143.9 L1407.0,142.8 L1408.0,142.8 L1409.0,143.7 L1410.0,141.7 L1411.0,144.3 L1412.0,142.6 L1413.0,144.4 L1414.0,145.7 L1415.0,145.6 L1416.0,144.6 L1417.0,144.0 L1418.0,143.6 L1419.0,149.3 L1420.0,145.2 L1421.0,143.5 L1422.0,144.2 L1423.0,146.7 L1424.0,145.5 L1425.0,146.2 L1426.0,145.6 L1427.0,145.5 L1428.0,145.2 L1429.0,146.4 L1430.0,146.2 L1431.0,144.1 L1432.0,143.7 L1433.0,143.5 L1434.0,145.7 L1435.0,145.1 L1436.0,143.1 L1437.0,145.1 L1438.0,144.6 L1439.0,141.2 L1440.0,144.6 L1441.0,144.7 L1442.0,143.7 L1443.0,141.4 L1444.0,144.1 L1445.0,143.1 L1446.0,144.1 L1447.0,144.0 L1448.0,144.8 L1449.0,140.4 L1450.0,144.5 L1451.0,145.7 L1452.0,144.9 L1453.0,145.0 L1454.0,143.7 L1455.0,145.6 L1456.0,146.0 L1457.0,143.4 L1458.0,145.4 L1459.0,143.0 L1460.0,145.2 L1461.0,144.9 L1462.0,145.5 L1463.0,145.0 L1464.0,145.4 L1465.0,143.9 L1466.0,147.4 L1467.0,146.7 L1468.0,147.0 L1469.0,145.5 L1470.0,143.0 L1471.0,142.0 L1472.0,143.9 L1473.0,143.4 L1474.0,143.6 L1475.0,144.8 L1476.0,146.7 L1477.0,145.7 L1478.0,144.5 L1479.0,144.5 L1480.0,144.8 L1481.0,146.9 L1482.0,145.5 L1483.0,145.4 L1484.0,145.2 L1485.0,143.6 L1486.0,146.2 L1487.0,145.4 L1488.0,144.8 L1489.0,144.6 L1490.0,144.3 L1491.0,138.6 L1492.0,144.6 L1493.0,145.0 L1494.0,144.4 L1495.0,144.0 L1496.0,144.6 L1497.0,163.8 L1498.0,163.8 L1499.0,141.9 L1500.0,143.7 L1501.0,146.3 L1502.0,144.8 L1503.0,145.0 L1504.0,149.2 L1505.0,143.8 L1506.0,140.5 L1507.0,144.0 L1508.0,143.4 L1509.0,146.2 L1510.0,144.9 L1511.0,163.8 L1512.0,163.8 L1513.0,163.8 L1514.0,145.1 L1515.0,146.1 L1516.0,145.2 L1517.0,144.1 L1518.0,143.8 L1519.0,145.7 L1520.0,146.3 L1521.0,146.7 L1522.0,145.8 L1523.0,144.2 L1524.0,154.7 L1525.0,153.5 L1526.0,144.0 L1527.0,144.3 L1528.0,143.5 L1529.0,142.9 L1530.0,143.8 L1531.0,143.4 L1532.0,143.3 L1533.0,143.9 L1534.0,146.5 L1535.0,144.2 L1536.0,144.3 L1537.0,145.6 L1538.0,144.4 L1539.0,144.8 L1540.0,144.0 L1541.0,143.0 L1542.0,144.4 L1543.0,144.7 L1544.0,144.4 L1545.0,144.8 L1546.0,144.2 L1547.0,145.2 L1548.0,145.4 L1549.0,144.5 L1550.0,144.7 L1551.0,144.3 L1552.0,143.5 L1553.0,144.2 L1554.0,143.9 L1555.0,143.6 L1556.0,144.2 L1557.0,144.3 L1558.0,144.6 L1559.0,145.2 L1560.0,150.6 L1561.0,151.3 L1562.0,146.6 L1563.0,145.6 L1564.0,146.0 L1565.0,150.7 L1566.0,150.6 L1567.0,143.5 L1568.0,145.0 L1569.0,143.8 L1570.0,145.2 L1571.0,146.4 L1572.0,144.9 L1573.0,144.5 L1574.0,144.9 L1575.0,143.6 L1576.0,144.0 L1577.0,145.7 L1578.0,145.2 L1579.0,145.4 L1580.0,144.0 L1581.0,143.3 L1582.0,144.6 L1583.0,143.8 L1584.0,147.1 L1585.0,142.4 L1586.0,143.3 L1587.0,147.0 L1587.8,152.0 L1588.2,164.0" stroke="#4b7bf0" stroke-width="2.500" fill="none" stroke-linejoin="round"/>
<path d="M69.0,164.8 L429.5,139.5 L697.0,119.4 L827.0,108.6 L957.0,98.4 L1588.0,52.3" stroke="#3fb273" stroke-width="2" fill="none"/>
<path d="M69 164.7H1589" stroke="#b7552f" stroke-width="2"/>
<path d="M69.5 38V165" stroke="#555" stroke-width="1"/>
<path d="M69.0,62.0 L71.5,62.5 L74.0,62.7 L76.5,62.7 L79.1,63.8 L81.6,63.9 L84.1,63.6 L86.6,64.0 L89.1,64.0 L91.6,64.0 L94.1,64.8 L96.6,65.2 L99.2,65.3 L101.7,65.4 L104.2,64.7 L106.7,65.6 L109.2,67.0 L111.7,66.1 L114.2,67.5 L116.7,67.9 L119.3,67.8 L121.8,68.1 L124.3,68.8 L126.8,68.7 L129.3,69.0 L131.8,69.7 L134.3,69.6 L136.8,70.8 L139.4,69.7 L141.9,70.3 L144.4,70.6 L146.9,71.1 L149.4,71.0 L151.9,72.5 L154.4,72.2 L156.9,71.4 L159.5,72.5 L162.0,73.1 L164.5,73.6 L167.0,73.6 L169.5,73.3 L172.0,74.3 L174.5,73.7 L177.0,74.6 L179.6,74.3 L182.1,75.7 L184.6,75.7 L187.1,76.7 L189.6,75.9 L192.1,76.3 L194.6,76.4 L197.1,77.4 L199.7,76.7 L202.2,77.8 L204.7,77.6 L207.2,78.4 L209.7,78.5 L212.2,78.3 L214.7,78.7 L217.2,78.4 L219.8,79.1 L222.3,79.5 L224.8,80.5 L227.3,80.2 L229.8,80.8 L232.3,80.9 L234.8,80.7 L237.3,81.8 L239.9,82.7 L242.4,82.4 L244.9,83.0 L247.4,83.0 L249.9,83.5 L252.4,84.2 L254.9,82.9 L257.4,83.6 L260.0,83.5 L262.5,84.5 L265.0,84.6 L267.5,84.7 L270.0,85.6 L272.5,86.5 L275.0,86.6 L277.5,87.0 L280.1,86.6 L282.6,87.0 L285.1,87.8 L287.6,87.8 L287.9,95.0 L288.6,97.5 L288.6,97.9 L291.1,97.6 L293.6,97.9 L296.1,98.0 L298.6,99.2 L301.1,98.5 L303.6,99.2 L306.2,99.6 L308.7,99.7 L311.2,99.9 L313.7,100.5 L316.2,100.2 L318.7,100.9 L321.2,101.7 L323.7,101.1 L326.2,102.2 L328.7,102.5 L331.2,103.0 L333.7,102.1 L336.2,103.5 L338.7,103.5 L341.3,104.0 L343.8,104.0 L346.3,103.8 L348.8,104.6 L351.3,104.5 L353.8,104.5 L356.3,104.7 L358.8,105.0 L361.3,105.4 L363.8,105.1 L366.3,106.2 L368.8,105.7 L371.3,106.9 L373.9,107.5 L376.4,107.7 L378.9,108.2 L381.4,108.4 L383.9,109.1 L386.4,108.2 L388.9,108.2 L391.4,108.8 L393.9,108.7 L396.4,110.0 L398.9,108.6 L401.4,109.9 L403.9,110.6 L406.4,110.8 L409.0,111.1 L411.5,110.6 L414.0,111.1 L416.5,111.5 L419.0,112.1 L421.5,112.4 L424.0,113.1 L424.0,112.5 L486.7,112.5 L487.0,58.6 L487.0,58.1 L489.5,59.0 L492.0,60.2 L494.5,60.1 L497.1,59.9 L499.6,60.4 L502.1,60.2 L504.6,61.2 L507.1,60.7 L509.6,61.6 L512.2,61.6 L514.7,61.4 L517.2,62.2 L519.7,62.3 L522.2,62.3 L524.7,63.0 L527.2,62.8 L529.8,64.0 L532.3,64.0 L534.8,64.5 L537.3,64.7 L539.8,64.8 L542.3,64.3 L544.9,65.1 L547.4,65.5 L549.9,65.6 L552.4,66.1 L554.9,66.2 L557.4,66.5 L560.0,66.6 L562.5,67.0 L565.0,67.0 L567.5,68.3 L570.0,68.2 L572.5,68.6 L575.0,69.0 L577.6,68.8 L580.1,69.7 L582.6,68.8 L585.1,69.6 L587.6,70.1 L590.1,71.2 L592.7,71.2 L595.2,71.4 L597.7,71.6 L600.2,71.3 L602.7,71.8 L605.2,71.8 L607.8,72.5 L610.3,72.2 L612.8,72.9 L615.3,73.1 L617.8,73.8 L620.3,73.6 L622.8,74.3 L625.4,74.6 L627.9,74.9 L630.4,75.4 L632.9,74.9 L635.4,75.6 L637.9,75.8 L640.5,76.6 L643.0,76.2 L645.5,76.9 L648.0,76.4 L650.5,77.2 L653.0,77.3 L655.5,77.9 L658.1,77.9 L660.6,78.4 L663.1,78.8 L665.6,78.6 L668.1,79.6 L670.6,79.3 L673.2,80.8 L675.7,80.7 L678.2,80.7 L680.7,80.8 L683.2,81.6 L685.7,81.5 L688.2,80.9 L690.8,82.2 L693.3,82.3 L695.8,81.4 L698.3,82.0 L700.8,83.6 L703.3,83.5 L705.9,83.3 L708.4,83.1 L710.9,83.7 L713.4,85.2 L715.9,83.8 L718.4,85.3 L721.0,86.4 L723.5,85.7 L726.0,85.5 L728.5,86.4 L728.7,94.0 L729.3,96.3 L729.3,96.6 L731.8,96.8 L734.3,96.8 L736.8,96.5 L739.3,97.8 L741.8,98.2 L744.3,98.3 L746.8,98.7 L749.3,98.8 L751.9,99.4 L754.4,100.9 L756.9,99.4 L759.4,100.1 L761.9,99.8 L764.4,99.8 L766.9,100.9 L769.4,101.8 L771.9,101.1 L774.4,101.6 L776.9,101.9 L779.4,101.8 L781.9,102.1 L784.4,103.1 L786.9,103.1 L789.4,103.6 L791.9,103.5 L794.4,104.9 L797.0,105.6 L799.5,104.5 L802.0,104.5 L804.5,106.0 L807.0,106.4 L809.5,107.0 L812.0,106.0 L814.5,106.7 L817.0,106.2 L819.5,107.5 L822.0,107.0 L824.5,107.1 L827.0,108.6 L829.5,108.7 L832.0,107.9 L834.5,108.8 L837.0,110.5 L839.6,108.7 L842.1,109.8 L844.6,111.2 L847.1,111.5 L849.6,111.1 L852.1,110.9 L854.6,111.8 L857.1,111.6 L859.6,112.4 L859.6,112.4 L911.2,112.4 L911.5,57.3 L911.5,57.8 L914.0,57.7 L916.5,58.5 L919.0,58.9 L921.5,58.2 L924.0,58.8 L926.5,58.8 L929.0,59.8 L931.5,59.1 L934.1,59.8 L936.6,59.6 L939.1,61.1 L941.6,60.8 L944.1,62.1 L946.6,62.2 L949.1,62.4 L951.6,62.2 L954.1,62.1 L956.6,62.7 L959.1,63.5 L961.6,63.8 L964.1,64.1 L966.6,64.5 L969.1,65.4 L971.6,65.7 L974.2,64.9 L976.7,66.1 L979.2,65.7 L981.7,66.5 L984.2,66.9 L986.7,67.5 L989.2,67.8 L991.7,67.2 L994.2,68.0 L996.7,68.6 L999.2,68.6 L1001.7,69.7 L1004.2,68.7 L1006.7,69.9 L1009.2,70.1 L1011.7,70.1 L1014.3,70.6 L1016.8,70.9 L1019.3,71.4 L1021.8,71.4 L1024.3,71.8 L1026.8,73.4 L1029.3,72.4 L1031.8,73.2 L1034.3,73.8 L1036.8,73.2 L1039.3,74.3 L1041.8,74.0 L1044.3,73.5 L1046.8,74.9 L1049.3,73.9 L1051.8,75.5 L1054.4,76.2 L1056.9,77.0 L1059.4,76.8 L1061.9,77.3 L1064.4,77.5 L1066.9,77.5 L1069.4,78.3 L1071.9,78.0 L1074.4,78.6 L1076.9,78.5 L1079.4,79.0 L1081.9,79.6 L1084.4,78.9 L1086.9,79.8 L1089.4,80.0 L1091.9,80.7 L1094.5,82.0 L1097.0,81.0 L1099.5,81.7 L1102.0,81.9 L1104.5,82.1 L1107.0,82.4 L1109.5,83.5 L1112.0,83.3 L1114.5,83.4 L1117.0,83.5 L1119.5,84.0 L1122.0,85.1 L1124.5,84.6 L1127.0,84.5 L1129.5,85.2 L1132.0,86.0 L1134.6,86.5 L1137.1,86.6 L1139.6,87.3 L1142.1,86.7 L1144.6,87.2 L1147.1,87.8 L1149.6,88.3 L1152.1,87.7 L1154.6,88.8 L1157.1,88.5 L1159.6,90.0 L1162.1,90.0 L1164.6,91.0 L1167.1,91.4 L1169.6,91.1 L1172.1,91.0 L1174.7,91.0 L1177.2,91.6 L1179.7,92.6 L1182.2,92.6 L1184.7,92.8 L1187.2,92.5 L1189.7,93.3 L1192.2,94.6 L1194.7,94.0 L1197.2,95.0 L1199.7,93.7 L1202.2,95.7 L1204.7,95.0 L1207.2,95.1 L1209.7,95.9 L1212.2,96.0 L1214.8,97.4 L1217.3,96.9 L1219.8,97.3 L1222.3,97.4 L1224.8,98.4 L1227.3,98.9 L1229.8,99.1 L1232.3,98.3 L1234.8,99.2 L1237.3,99.9 L1239.8,99.1 L1242.3,100.2 L1244.8,101.0 L1247.3,101.6 L1249.8,101.5 L1252.3,102.0 L1254.8,102.3 L1257.4,102.4 L1259.9,101.7 L1262.4,103.7 L1264.9,103.6 L1267.4,103.5 L1269.9,103.5 L1272.4,105.3 L1274.9,104.7 L1277.4,105.3 L1279.9,105.0 L1282.4,105.6 L1284.9,105.9 L1287.4,106.7 L1289.9,105.7 L1292.4,107.6 L1294.9,107.2 L1297.5,107.8 L1300.0,108.2 L1302.5,107.9 L1305.0,108.8 L1307.5,108.3 L1310.0,109.2 L1312.5,109.1 L1315.0,110.2 L1317.5,110.7 L1320.0,109.9 L1322.5,110.9 L1325.0,110.7 L1327.5,110.8 L1330.0,111.7 L1332.5,112.5 L1335.0,112.9 L1337.6,112.5 L1340.1,112.9 L1342.6,114.0 L1345.1,113.7 L1347.6,114.8 L1350.1,115.2 L1352.6,114.9 L1355.1,114.6 L1357.6,115.2 L1360.1,116.0 L1362.6,115.9 L1365.1,116.3 L1367.6,116.8 L1370.1,116.2 L1372.6,117.1 L1375.1,117.4 L1377.7,117.5 L1380.2,118.3 L1382.7,118.4 L1385.2,118.7 L1387.7,119.9 L1390.2,120.2 L1392.7,119.8 L1395.2,119.9 L1397.7,119.8 L1400.2,120.0 L1402.7,121.9 L1405.2,121.5 L1407.7,121.4 L1410.2,121.5 L1412.7,123.0 L1415.2,122.7 L1417.8,123.4 L1420.3,123.9 L1422.8,123.4 L1425.3,123.5 L1427.8,124.4 L1430.3,125.0 L1432.8,125.0 L1435.3,125.4 L1437.8,125.9 L1440.3,125.6 L1442.8,126.7 L1445.3,127.1 L1447.8,126.5 L1450.3,127.0 L1452.8,127.5 L1455.3,127.7 L1457.9,128.2 L1460.4,129.1 L1462.9,128.4 L1465.4,129.5 L1467.9,129.5 L1470.4,129.6 L1472.9,129.7 L1475.4,129.7 L1477.9,131.0 L1480.4,131.9 L1482.9,131.2 L1485.4,132.2 L1487.9,131.7 L1490.4,132.8 L1492.9,132.8 L1495.4,133.1 L1498.0,132.9 L1500.5,133.6 L1503.0,134.0 L1505.5,135.1 L1508.0,135.1 L1510.5,135.4 L1513.0,135.2 L1515.5,135.9 L1518.0,136.5 L1518.0,136.4 L1588.0,136.4 L1588.3,54.5" stroke="#8b3a96" stroke-width="2.400" fill="none" stroke-linejoin="round"/>
<path d="M277.03 76.17 A12.3 12.3 0 1 1 298.57 76.17 C297.09 78.86 287.80 86.11 287.80 89.80 C287.80 86.11 278.51 78.86 277.03 76.17Z" fill="#fb0d12"/><text x="287.8" y="75.6" font-size="10" text-anchor="middle" fill="#fff">26</text>
<path d="M476.23 40.97 A12.3 12.3 0 1 1 497.77 40.97 C496.29 43.66 487.00 50.91 487.00 54.60 C487.00 50.91 477.71 43.66 476.23 40.97Z" fill="#078807"/><text x="487.0" y="40.4" font-size="8.6" text-anchor="middle" fill="#fff">213</text>
<path d="M717.83 74.57 A12.3 12.3 0 1 1 739.37 74.57 C737.89 77.26 728.60 84.51 728.60 88.20 C728.60 84.51 719.31 77.26 717.83 74.57Z" fill="#fb0d12"/><text x="728.6" y="74.0" font-size="10" text-anchor="middle" fill="#fff">24</text>
<path d="M900.73 39.87 A12.3 12.3 0 1 1 922.27 39.87 C920.79 42.56 911.50 49.81 911.50 53.50 C911.50 49.81 902.21 42.56 900.73 39.87Z" fill="#078807"/><text x="911.5" y="39.3" font-size="8.6" text-anchor="middle" fill="#fff">219</text>
<path d="M1577.53 41.57 A12.3 12.3 0 1 1 1599.07 41.57 C1597.59 44.26 1588.30 51.51 1588.30 55.20 C1588.30 51.51 1579.01 44.26 1577.53 41.57Z" fill="#078807"/><text x="1588.3" y="41.0" font-size="10" text-anchor="middle" fill="#fff">306</text>
<rect x="70" y="188.4" width="1522" height="20.800" fill="#8e9aa9"/>
<rect x="68" y="193" width="4" height="11.500" rx="1.500" fill="#b4c3dc"/><rect x="1590" y="193" width="4" height="11.500" rx="1.500" fill="#b4c3dc"/>
</svg>
<style>
.hl{position:absolute;height:1px;background:#e2e3e7}.vl{position:absolute;width:1px;background:#e2e3e7}
.th{position:absolute;font-weight:bold;font-size:13.700px;line-height:18px;color:#4b5166;white-space:nowrap}
.th2{position:absolute;font-weight:bold;font-size:15px;line-height:23.500px;color:#4b5166;white-space:nowrap}
.td{position:absolute;font-size:13.700px;line-height:18px;color:#5a5e66;white-space:nowrap}
.bd{position:absolute;height:27.400px;line-height:30.400px;overflow:hidden;border-radius:3px;background:#2db4f0;color:#fff;font-size:14px;text-align:center;white-space:nowrap}
.ad{position:absolute;left:1815px;font-size:14px;line-height:20.800px;color:#5a5e66;white-space:nowrap;font-family:"Liberation Sans","Noto Sans CJK SC",sans-serif}
.ov{position:absolute;background:#fff}
.big{position:absolute;font-size:19.500px;line-height:24px;color:#656a76;white-space:nowrap}
.st{position:absolute;font-size:16px;line-height:20px;color:#656a76;white-space:nowrap}
</style>
<div class="lbl" style="left:303px;top:354px;color:#3f8de0">Change List</div>
<div class="lbl" style="left:445px;top:354px">Record List</div>
<div class="hl" style="left:285px;top:382px;width:1634px;background:#e2e5ea"></div>
<div class="abs" style="left:285px;top:380.500px;width:94px;height:2.400px;background:#3f8de0;border-radius:1px"></div>
<div class="abs" style="left:285px;top:402px;width:1634px;height:529.500px;background:#fff;border:1px solid #e2e3e7;border-right:0"></div>
<div class="abs" style="left:286px;top:403px;width:1633px;height:45.500px;background:#f8f8fa"></div>
<div class="hl" style="left:285px;top:447.9px;width:1634px"></div>
<div class="hl" style="left:285px;top:503.1px;width:1634px"></div>
<div class="hl" style="left:285px;top:558.3px;width:1634px"></div>
<div class="hl" style="left:285px;top:613.5px;width:1634px"></div>
<div class="hl" style="left:285px;top:668.7px;width:1634px"></div>
<div class="hl" style="left:285px;top:723.9px;width:1634px"></div>
<div class="vl" style="left:346.5px;top:448px;height:276.400px"></div>
<div class="vl" style="left:733.5px;top:448px;height:276.400px"></div>
<div class="vl" style="left:859.5px;top:448px;height:276.400px"></div>
<div class="vl" style="left:987.5px;top:448px;height:276.400px"></div>
<div class="vl" style="left:1177.1px;top:448px;height:276.400px"></div>
<div class="vl" style="left:1366.9px;top:448px;height:276.400px"></div>
<div class="vl" style="left:1580.0px;top:448px;height:276.400px"></div>
<div class="vl" style="left:1793.0px;top:448px;height:276.400px"></div>
<div class="vl" style="left:1177.1px;top:402px;height:46px"></div>
<div class="vl" style="left:1366.9px;top:402px;height:46px"></div>
<div class="vl" style="left:1580.0px;top:402px;height:46px"></div>
<div class="vl" style="left:1793.0px;top:402px;height:46px"></div>
<div class="vl" style="left:998px;top:408px;height:26px;opacity:.7"></div>
<div class="vl" style="left:987.500px;top:402px;height:46px"></div>
<div class="th" style="left:306px;top:417.500px">#</div>
<div class="th" style="left:1009px;top:417.500px">Begin Time</div>
<div class="th" style="left:1199px;top:417.500px">End Time</div>
<div class="th" style="left:1389px;top:417.500px">Marker</div>
<div class="th" style="left:1602px;top:417.500px">action</div>
<div class="th" style="left:1815px;top:417.500px">Start Address(CN)</div>
<div class="td" style="left:306.500px;top:467.6px;z-index:3">1</div>
<div class="td" style="left:640px;top:467.6px">25.79</div>
<div class="td" style="left:755px;top:467.6px">302.26</div>
<div class="td" style="left:882px;top:467.6px">276.47</div>
<div class="bd" style="left:1009px;top:462.4px;width:147.800px">2022-03-19 19:48:38</div><div class="td" style="left:1158px;top:468.6px;letter-spacing:.5px">...</div>
<div class="bd" style="left:1199px;top:462.4px;width:147.800px">2022-03-19 19:59:08</div><div class="td" style="left:1348px;top:468.6px;letter-spacing:.5px">...</div>
<div class="bd" style="left:1607.800px;top:462.4px;width:42.200px;background:#2f8ae6">Edit</div>
<div class="bd" style="left:1656px;top:462.4px;width:57.300px;background:#e8421a">Delete</div>
<div class="bd" style="left:1719px;top:462.4px;width:52px">Track</div>
<div class="ad" style="top:466.2px">广东省广州市番禺区大石街道</div>
<div class="td" style="left:306.500px;top:522.8px;z-index:3">2</div>
<div class="td" style="left:640px;top:522.8px">212.58</div>
<div class="td" style="left:755px;top:522.8px">206.53</div>
<div class="td" style="left:882px;top:522.8px">419.11</div>
<div class="bd" style="left:1009px;top:517.6px;width:147.800px">2022-03-20 08:26:36</div><div class="td" style="left:1158px;top:523.8px;letter-spacing:.5px">...</div>
<div class="bd" style="left:1199px;top:517.6px;width:147.800px">2022-03-20 08:27:06</div><div class="td" style="left:1348px;top:523.8px;letter-spacing:.5px">...</div>
<div class="bd" style="left:1607.800px;top:517.6px;width:42.200px;background:#2f8ae6">Edit</div>
<div class="bd" style="left:1656px;top:517.6px;width:57.300px;background:#e8421a">Delete</div>
<div class="bd" style="left:1719px;top:517.6px;width:52px">Track</div>
<div class="ad" style="top:511.0px">广东省广州市白云区太和镇物流<br>园内,白云货运市场东北</div>
<div class="td" style="left:306.500px;top:578.0px;z-index:3">3</div>
<div class="td" style="left:640px;top:578.0px">24.38</div>
<div class="td" style="left:755px;top:578.0px">306.09</div>
<div class="td" style="left:882px;top:578.0px">281.71</div>
<div class="bd" style="left:1009px;top:572.8px;width:147.800px">2022-03-21 19:49:04</div><div class="td" style="left:1158px;top:579.0px;letter-spacing:.5px">...</div>
<div class="bd" style="left:1199px;top:572.8px;width:147.800px">2022-03-21 19:59:04</div><div class="td" style="left:1348px;top:579.0px;letter-spacing:.5px">...</div>
<div class="bd" style="left:1607.800px;top:572.8px;width:42.200px;background:#2f8ae6">Edit</div>
<div class="bd" style="left:1656px;top:572.8px;width:57.300px;background:#e8421a">Delete</div>
<div class="bd" style="left:1719px;top:572.8px;width:52px">Track</div>
<div class="ad" style="top:576.6px">广东省广州市番禺区大石街道</div>
<div class="td" style="left:306.500px;top:633.2px;z-index:3">4</div>
<div class="td" style="left:640px;top:633.2px">219.33</div>
<div class="td" style="left:755px;top:633.2px">204.69</div>
<div class="td" style="left:882px;top:633.2px">424.02</div>
<div class="bd" style="left:1009px;top:628.0px;width:147.800px">2022-03-22 14:36:02</div><div class="td" style="left:1158px;top:634.2px;letter-spacing:.5px">...</div>
<div class="bd" style="left:1199px;top:628.0px;width:147.800px">2022-03-22 14:37:02</div><div class="td" style="left:1348px;top:634.2px;letter-spacing:.5px">...</div>
<div class="bd" style="left:1607.800px;top:628.0px;width:42.200px;background:#2f8ae6">Edit</div>
<div class="bd" style="left:1656px;top:628.0px;width:57.300px;background:#e8421a">Delete</div>
<div class="bd" style="left:1719px;top:628.0px;width:52px">Track</div>
<div class="ad" style="top:621.4px">广东省广州市从化区鳌头镇<br>有限公司东南539米</div>
<div class="td" style="left:306.500px;top:688.4px;z-index:3">5</div>
<div class="td" style="left:640px;top:688.4px">306.20</div>
<div class="td" style="left:755px;top:688.4px">108.74</div>
<div class="td" style="left:882px;top:688.4px">414.94</div>
<div class="bd" style="left:1009px;top:683.2px;width:147.800px">2022-03-25 13:21:27</div><div class="td" style="left:1158px;top:689.4px;letter-spacing:.5px">...</div>
<div class="bd" style="left:1199px;top:683.2px;width:147.800px">2022-03-25 13:22:36</div><div class="td" style="left:1348px;top:689.4px;letter-spacing:.5px">...</div>
<div class="bd" style="left:1607.800px;top:683.2px;width:42.200px;background:#2f8ae6">Edit</div>
<div class="bd" style="left:1656px;top:683.2px;width:57.300px;background:#e8421a">Delete</div>
<div class="bd" style="left:1719px;top:683.2px;width:52px">Track</div>
<div class="ad" style="top:676.6px">广东省广州市白云区太和镇物流<br>园内,白云货运市场东北</div>
<div class="abs" style="left:273px;top:948px;width:1480px;height:34px;background:linear-gradient(to bottom,rgba(0,0,0,0),rgba(0,0,0,.055));-webkit-mask-image:linear-gradient(to right,#000 75%,transparent);mask-image:linear-gradient(to right,#000 75%,transparent)"></div>
<div class="btn" style="left:290.500px;top:938.500px;width:61.500px;height:37px;line-height:37px;background:#308cea;border-radius:4px">Add</div>
<div class="ov" style="left:347.500px;top:437px;width:284px;height:400px"></div>
<div class="ov" style="left:334px;top:500px;width:14px;height:8px"></div>
<div class="ov" style="left:326px;top:555px;width:22px;height:8px"></div>
<div class="ov" style="left:322px;top:610px;width:26px;height:8px"></div>
<div class="ov" style="left:330px;top:665px;width:18px;height:8px"></div>
<div class="ov" style="left:338px;top:720px;width:10px;height:8px"></div>
<div class="vl" style="left:346.500px;top:437px;height:318px"></div>
<div class="abs" style="left:347px;top:386px;width:156px;height:51px;background:#f8f8fa"></div>
<div class="hl" style="left:285px;top:402px;width:72px"></div>
<div class="hl" style="left:476px;top:402px;width:62px"></div>
<div class="abs" style="left:503px;top:404px;width:117px;height:57.400px;background:#f8f8fa"></div>
<div class="vl" style="left:502.500px;top:402px;height:46px"></div>
<div class="hl" style="left:538px;top:407px;width:30px;opacity:.8"></div>
<div class="abs" style="left:583px;top:394.300px;width:404px;height:52.500px;background:#f8f8fa"></div>
<div class="hl" style="left:602px;top:394px;width:354px"></div>
<div class="hl" style="left:583px;top:446px;width:404px"></div>
<div class="hl" style="left:583px;top:394px;width:1px;height:52px;opacity:.6"></div>
<div class="ov" style="left:620px;top:447px;width:367px;height:12px"></div>
<div class="vl" style="left:712.500px;top:394px;height:65px"></div>
<div class="vl" style="left:855px;top:394px;height:65px"></div>
<div class="vl" style="left:733.500px;top:459px;height:10px"></div>
<div class="hl" style="left:347px;top:437.2px;width:150px;opacity:.75"></div>
<div class="hl" style="left:347px;top:515.6px;width:148px;opacity:.75"></div>
<div class="hl" style="left:347px;top:594.0px;width:120px;opacity:.75"></div>
<div class="hl" style="left:347px;top:672.4px;width:148px;opacity:.75"></div>
<div class="hl" style="left:347px;top:750.8px;width:148px;opacity:.75"></div>
<div class="hl" style="left:388px;top:829.200px;width:65px;opacity:.75"></div>
<div class="hl" style="left:505px;top:461.4px;width:114px;opacity:.75"></div>
<div class="hl" style="left:517px;top:526.5px;width:118px;opacity:.75"></div>
<div class="hl" style="left:517px;top:591.6px;width:118px;opacity:.75"></div>
<div class="hl" style="left:517px;top:656.7px;width:118px;opacity:.75"></div>
<div class="hl" style="left:513px;top:721.8px;width:120px;opacity:.75"></div>
<div class="hl" style="left:532px;top:786.500px;width:66px;opacity:.75"></div>
<div class="hl" style="left:388px;top:371.500px;width:66px;background:#e2e5ea"></div>
<div class="abs" style="left:380px;top:372px;width:84px;height:13px;background:#f8f8fa"></div>
<div class="hl" style="left:388px;top:371.500px;width:66px;background:#e2e5ea"></div>
<div class="abs" style="left:377.500px;top:394px;font-weight:bold;font-size:19px;line-height:24px;color:#4b5166;white-space:nowrap">Box Idex</div>
<div class="big" style="left:377px;top:465.6px">Total Driving</div>
<div class="big" style="left:377px;top:544.0px">Total Driving</div>
<div class="big" style="left:377px;top:622.4px">Total Driving</div>
<div class="big" style="left:377px;top:700.8px">Total Driving</div>
<div class="big" style="left:377px;top:779.2px">Total Driving</div>
<div class="abs" style="left:527px;top:426px;font-weight:bold;font-size:16px;line-height:20px;color:#4b5166;white-space:nowrap">Status</div>
<div class="abs" style="left:526px;top:420.500px;width:3px;height:1.200px;background:#9a9ea8;transform:rotate(-50deg)"></div>
<div class="st" style="left:527px;top:485.0px">Leak</div>
<div class="st" style="left:527px;top:550.0px">Refuel</div>
<div class="st" style="left:527px;top:615.3px">Leak</div>
<div class="st" style="left:527px;top:680.3px">Refuel</div>
<div class="st" style="left:527px;top:744.7px">Refuel</div>
<div class="th2" style="left:608px;top:397.600px">Fuel<br>Volume(L)</div>
<div class="th2" style="left:737.5px;top:397.600px">Start Fuel<br>Volume(L)</div>
<div class="th2" style="left:880.2px;top:397.600px">End Fuel<br>Volume(L)</div>
<div class="abs" style="left:-60px;top:613px;width:377px;height:90px;border-radius:120px / 45px;background:#eaf6fb;filter:blur(1.500px)"></div>
<div class="abs" style="left:-6px;top:646px;width:12px;height:22px;border-radius:50%;border:1.500px solid #b9d6ee"></div>
<div class="abs" style="left:23.500px;top:643px;font-size:24.850px;line-height:30px;color:#418fde;white-space:nowrap">Fule Real Mileage</div>
<svg class="abs" style="left:0;top:0;pointer-events:none" width="1919" height="986" viewBox="0 0 1919 986" fill="none" stroke="#e30d17" stroke-width="2">
<ellipse cx="139.300" cy="659.800" rx="136.500" ry="37.500"/>
<ellipse cx="471.500" cy="623" rx="143" ry="236.500"/>
<ellipse cx="786.200" cy="417.500" rx="201.200" ry="49.700"/>
<path d="M256 672L777.500 800"/>
<path d="M237.500 668.500L259 665.600L255 677Z" fill="#f20d18" stroke="none"/>
</svg>
<div class="ov" style="left:481.800px;top:782px;width:6px;height:22px"></div>
<div class="ov" style="left:471px;top:797.800px;width:16px;height:6px"></div>
<div class="abs" style="left:762.500px;top:722px;width:600px;height:80px;font-weight:bold;font-size:66.500px;line-height:80px;color:#f90a10;white-space:nowrap"><span class="abs" style="left:0;top:0;letter-spacing:-1.200px">Fuel</span> <span class="abs" style="left:149px;top:0;letter-spacing:0">Real</span> <span class="abs" style="left:304.800px;top:0;letter-spacing:2.800px">Mileage</span></div>
<div class="abs" style="left:1779px;top:958.500px;width:142px;height:24px;background:#4b5266;border:1.500px solid #f2f3f6;border-right:0;border-bottom:0;box-shadow:-1px -1px 0 #3b4154"></div>
<div class="abs" style="left:1787px;top:963px;font-size:15px;line-height:18px;color:#5d6479;white-space:nowrap">Message</div>
<svg class="abs" style="left:1868px;top:966px" width="48" height="16" viewBox="0 0 48 16" fill="none" stroke="#c9ccd6" stroke-width="1"><rect x="1" y="4" width="9" height="9" rx="1.500"/><path d="M3.500 4V2.500a1.500 1.500 0 0 1 1.500-1.500h6a1.500 1.500 0 0 1 1.500 1.500v6a1.500 1.500 0 0 1-1.500 1.500H10"/><rect x="33.500" y="1.500" width="13" height="13"/></svg>
<div class="abs" style="left:0;top:981.500px;width:1919px;height:5px;background:#f1f8f1;border-top:1px solid #b9e0bc"></div>
<div class="abs" style="left:1779px;top:981.500px;width:140px;height:1px;background:#9a9ca6"></div>
</body>
</html>
